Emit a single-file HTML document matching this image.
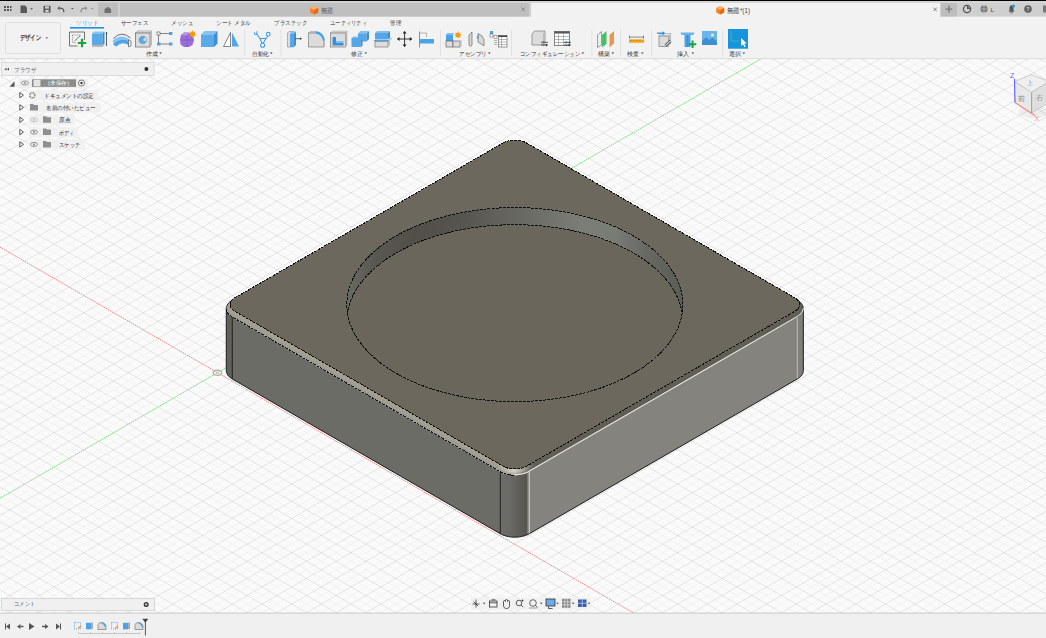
<!DOCTYPE html>
<html><head><meta charset="utf-8">
<style>
*{margin:0;padding:0;box-sizing:border-box}
html,body{width:1046px;height:638px;overflow:hidden;background:#f2f2f2;font-family:"Liberation Sans",sans-serif}
.abs{position:absolute}
#title{position:absolute;left:0;top:0;width:1046px;height:17px;background:#cfcfcf;border-top:1px solid #000}
.tab{position:absolute;top:2px;height:14px;background:#bebebe}
#toolbar{position:absolute;left:0;top:17px;width:1046px;height:42px;background:#f2f2f2;border-bottom:1px solid #d9d9d9}
.lbl{position:absolute;font-size:6px;color:#333;white-space:nowrap;line-height:8px}
.tabl{position:absolute;top:19px;font-size:6.5px;color:#555;white-space:nowrap;line-height:8px}
#bottom{position:absolute;left:0;top:613px;width:1046px;height:25px;background:#f0f0f0;border-top:1px solid #c9c9c9}
.row{position:absolute;height:10px;background:rgba(240,240,240,0.9);font-size:6px;line-height:10px;color:#333;white-space:nowrap}
</style></head><body>
<svg width="1046" height="554" viewBox="0 59 1046 554" style="position:absolute;left:0;top:59px">
<rect x="0" y="59" width="1046" height="554" fill="#ffffff"/>
<path d="M0.00,-959.54L1046.00,-355.58M0.00,-957.83L1046.00,-353.87M0.00,-956.11L1046.00,-352.15M0.00,-954.40L1046.00,-350.44M0.00,-950.97L1046.00,-347.01M0.00,-949.26L1046.00,-345.30M0.00,-947.54L1046.00,-343.58M0.00,-945.83L1046.00,-341.87M0.00,-942.40L1046.00,-338.44M0.00,-940.69L1046.00,-336.73M0.00,-938.97L1046.00,-335.01M0.00,-937.26L1046.00,-333.30M0.00,-933.83L1046.00,-329.87M0.00,-932.12L1046.00,-328.16M0.00,-930.40L1046.00,-326.44M0.00,-928.69L1046.00,-324.73M0.00,-925.26L1046.00,-321.30M0.00,-923.55L1046.00,-319.59M0.00,-921.83L1046.00,-317.87M0.00,-920.12L1046.00,-316.16M0.00,-916.69L1046.00,-312.73M0.00,-914.98L1046.00,-311.02M0.00,-913.26L1046.00,-309.30M0.00,-911.55L1046.00,-307.59M0.00,-908.12L1046.00,-304.16M0.00,-906.41L1046.00,-302.45M0.00,-904.69L1046.00,-300.73M0.00,-902.98L1046.00,-299.02M0.00,-899.55L1046.00,-295.59M0.00,-897.84L1046.00,-293.88M0.00,-896.12L1046.00,-292.16M0.00,-894.41L1046.00,-290.45M0.00,-890.98L1046.00,-287.02M0.00,-889.27L1046.00,-285.31M0.00,-887.55L1046.00,-283.59M0.00,-885.84L1046.00,-281.88M0.00,-882.41L1046.00,-278.45M0.00,-880.70L1046.00,-276.74M0.00,-878.98L1046.00,-275.02M0.00,-877.27L1046.00,-273.31M0.00,-873.84L1046.00,-269.88M0.00,-872.13L1046.00,-268.17M0.00,-870.41L1046.00,-266.45M0.00,-868.70L1046.00,-264.74M0.00,-865.27L1046.00,-261.31M0.00,-863.56L1046.00,-259.60M0.00,-861.84L1046.00,-257.88M0.00,-860.13L1046.00,-256.17M0.00,-856.70L1046.00,-252.74M0.00,-854.99L1046.00,-251.03M0.00,-853.27L1046.00,-249.31M0.00,-851.56L1046.00,-247.60M0.00,-848.13L1046.00,-244.17M0.00,-846.42L1046.00,-242.46M0.00,-844.70L1046.00,-240.74M0.00,-842.99L1046.00,-239.03M0.00,-839.56L1046.00,-235.60M0.00,-837.85L1046.00,-233.89M0.00,-836.13L1046.00,-232.17M0.00,-834.42L1046.00,-230.46M0.00,-830.99L1046.00,-227.03M0.00,-829.28L1046.00,-225.32M0.00,-827.56L1046.00,-223.60M0.00,-825.85L1046.00,-221.89M0.00,-822.42L1046.00,-218.46M0.00,-820.71L1046.00,-216.75M0.00,-818.99L1046.00,-215.03M0.00,-817.28L1046.00,-213.32M0.00,-813.85L1046.00,-209.89M0.00,-812.14L1046.00,-208.18M0.00,-810.42L1046.00,-206.46M0.00,-808.71L1046.00,-204.75M0.00,-805.28L1046.00,-201.32M0.00,-803.57L1046.00,-199.61M0.00,-801.85L1046.00,-197.89M0.00,-800.14L1046.00,-196.18M0.00,-796.71L1046.00,-192.75M0.00,-795.00L1046.00,-191.04M0.00,-793.28L1046.00,-189.32M0.00,-791.57L1046.00,-187.61M0.00,-788.14L1046.00,-184.18M0.00,-786.43L1046.00,-182.47M0.00,-784.71L1046.00,-180.75M0.00,-783.00L1046.00,-179.04M0.00,-779.57L1046.00,-175.61M0.00,-777.86L1046.00,-173.90M0.00,-776.14L1046.00,-172.18M0.00,-774.43L1046.00,-170.47M0.00,-771.00L1046.00,-167.04M0.00,-769.29L1046.00,-165.33M0.00,-767.57L1046.00,-163.61M0.00,-765.86L1046.00,-161.90M0.00,-762.43L1046.00,-158.47M0.00,-760.72L1046.00,-156.76M0.00,-759.00L1046.00,-155.04M0.00,-757.29L1046.00,-153.33M0.00,-753.86L1046.00,-149.90M0.00,-752.15L1046.00,-148.19M0.00,-750.43L1046.00,-146.47M0.00,-748.72L1046.00,-144.76M0.00,-745.29L1046.00,-141.33M0.00,-743.58L1046.00,-139.62M0.00,-741.86L1046.00,-137.90M0.00,-740.15L1046.00,-136.19M0.00,-736.72L1046.00,-132.76M0.00,-735.01L1046.00,-131.05M0.00,-733.29L1046.00,-129.33M0.00,-731.58L1046.00,-127.62M0.00,-728.15L1046.00,-124.19M0.00,-726.44L1046.00,-122.48M0.00,-724.72L1046.00,-120.76M0.00,-723.01L1046.00,-119.05M0.00,-719.58L1046.00,-115.62M0.00,-717.87L1046.00,-113.91M0.00,-716.15L1046.00,-112.19M0.00,-714.44L1046.00,-110.48M0.00,-711.01L1046.00,-107.05M0.00,-709.30L1046.00,-105.34M0.00,-707.58L1046.00,-103.62M0.00,-705.87L1046.00,-101.91M0.00,-702.44L1046.00,-98.48M0.00,-700.73L1046.00,-96.77M0.00,-699.01L1046.00,-95.05M0.00,-697.30L1046.00,-93.34M0.00,-693.87L1046.00,-89.91M0.00,-692.16L1046.00,-88.20M0.00,-690.44L1046.00,-86.48M0.00,-688.73L1046.00,-84.77M0.00,-685.30L1046.00,-81.34M0.00,-683.59L1046.00,-79.63M0.00,-681.87L1046.00,-77.91M0.00,-680.16L1046.00,-76.20M0.00,-676.73L1046.00,-72.77M0.00,-675.02L1046.00,-71.06M0.00,-673.30L1046.00,-69.34M0.00,-671.59L1046.00,-67.63M0.00,-668.16L1046.00,-64.20M0.00,-666.45L1046.00,-62.49M0.00,-664.73L1046.00,-60.77M0.00,-663.02L1046.00,-59.06M0.00,-659.59L1046.00,-55.63M0.00,-657.88L1046.00,-53.92M0.00,-656.16L1046.00,-52.20M0.00,-654.45L1046.00,-50.49M0.00,-651.02L1046.00,-47.06M0.00,-649.31L1046.00,-45.35M0.00,-647.59L1046.00,-43.63M0.00,-645.88L1046.00,-41.92M0.00,-642.45L1046.00,-38.49M0.00,-640.74L1046.00,-36.78M0.00,-639.02L1046.00,-35.06M0.00,-637.31L1046.00,-33.35M0.00,-633.88L1046.00,-29.92M0.00,-632.17L1046.00,-28.21M0.00,-630.45L1046.00,-26.49M0.00,-628.74L1046.00,-24.78M0.00,-625.31L1046.00,-21.35M0.00,-623.60L1046.00,-19.64M0.00,-621.88L1046.00,-17.92M0.00,-620.17L1046.00,-16.21M0.00,-616.74L1046.00,-12.78M0.00,-615.03L1046.00,-11.07M0.00,-613.31L1046.00,-9.35M0.00,-611.60L1046.00,-7.64M0.00,-608.17L1046.00,-4.21M0.00,-606.46L1046.00,-2.50M0.00,-604.74L1046.00,-0.78M0.00,-603.03L1046.00,0.93M0.00,-599.60L1046.00,4.36M0.00,-597.89L1046.00,6.07M0.00,-596.17L1046.00,7.79M0.00,-594.46L1046.00,9.50M0.00,-591.03L1046.00,12.93M0.00,-589.32L1046.00,14.64M0.00,-587.60L1046.00,16.36M0.00,-585.89L1046.00,18.07M0.00,-582.46L1046.00,21.50M0.00,-580.75L1046.00,23.21M0.00,-579.03L1046.00,24.93M0.00,-577.32L1046.00,26.64M0.00,-573.89L1046.00,30.07M0.00,-572.18L1046.00,31.78M0.00,-570.46L1046.00,33.50M0.00,-568.75L1046.00,35.21M0.00,-565.32L1046.00,38.64M0.00,-563.61L1046.00,40.35M0.00,-561.89L1046.00,42.07M0.00,-560.18L1046.00,43.78M0.00,-556.75L1046.00,47.21M0.00,-555.04L1046.00,48.92M0.00,-553.32L1046.00,50.64M0.00,-551.61L1046.00,52.35M0.00,-548.18L1046.00,55.78M0.00,-546.47L1046.00,57.49M0.00,-544.75L1046.00,59.21M0.00,-543.04L1046.00,60.92M0.00,-539.61L1046.00,64.35M0.00,-537.90L1046.00,66.06M0.00,-536.18L1046.00,67.78M0.00,-534.47L1046.00,69.49M0.00,-531.04L1046.00,72.92M0.00,-529.33L1046.00,74.63M0.00,-527.61L1046.00,76.35M0.00,-525.90L1046.00,78.06M0.00,-522.47L1046.00,81.49M0.00,-520.76L1046.00,83.20M0.00,-519.04L1046.00,84.92M0.00,-517.33L1046.00,86.63M0.00,-513.90L1046.00,90.06M0.00,-512.19L1046.00,91.77M0.00,-510.47L1046.00,93.49M0.00,-508.76L1046.00,95.20M0.00,-505.33L1046.00,98.63M0.00,-503.62L1046.00,100.34M0.00,-501.90L1046.00,102.06M0.00,-500.19L1046.00,103.77M0.00,-496.76L1046.00,107.20M0.00,-495.05L1046.00,108.91M0.00,-493.33L1046.00,110.63M0.00,-491.62L1046.00,112.34M0.00,-488.19L1046.00,115.77M0.00,-486.48L1046.00,117.48M0.00,-484.76L1046.00,119.20M0.00,-483.05L1046.00,120.91M0.00,-479.62L1046.00,124.34M0.00,-477.91L1046.00,126.05M0.00,-476.19L1046.00,127.77M0.00,-474.48L1046.00,129.48M0.00,-471.05L1046.00,132.91M0.00,-469.34L1046.00,134.62M0.00,-467.62L1046.00,136.34M0.00,-465.91L1046.00,138.05M0.00,-462.48L1046.00,141.48M0.00,-460.77L1046.00,143.19M0.00,-459.05L1046.00,144.91M0.00,-457.34L1046.00,146.62M0.00,-453.91L1046.00,150.05M0.00,-452.20L1046.00,151.76M0.00,-450.48L1046.00,153.48M0.00,-448.77L1046.00,155.19M0.00,-445.34L1046.00,158.62M0.00,-443.63L1046.00,160.33M0.00,-441.91L1046.00,162.05M0.00,-440.20L1046.00,163.76M0.00,-436.77L1046.00,167.19M0.00,-435.06L1046.00,168.90M0.00,-433.34L1046.00,170.62M0.00,-431.63L1046.00,172.33M0.00,-428.20L1046.00,175.76M0.00,-426.49L1046.00,177.47M0.00,-424.77L1046.00,179.19M0.00,-423.06L1046.00,180.90M0.00,-419.63L1046.00,184.33M0.00,-417.92L1046.00,186.04M0.00,-416.20L1046.00,187.76M0.00,-414.49L1046.00,189.47M0.00,-411.06L1046.00,192.90M0.00,-409.35L1046.00,194.61M0.00,-407.63L1046.00,196.33M0.00,-405.92L1046.00,198.04M0.00,-402.49L1046.00,201.47M0.00,-400.78L1046.00,203.18M0.00,-399.06L1046.00,204.90M0.00,-397.35L1046.00,206.61M0.00,-393.92L1046.00,210.04M0.00,-392.21L1046.00,211.75M0.00,-390.49L1046.00,213.47M0.00,-388.78L1046.00,215.18M0.00,-385.35L1046.00,218.61M0.00,-383.64L1046.00,220.32M0.00,-381.92L1046.00,222.04M0.00,-380.21L1046.00,223.75M0.00,-376.78L1046.00,227.18M0.00,-375.07L1046.00,228.89M0.00,-373.35L1046.00,230.61M0.00,-371.64L1046.00,232.32M0.00,-368.21L1046.00,235.75M0.00,-366.50L1046.00,237.46M0.00,-364.78L1046.00,239.18M0.00,-363.07L1046.00,240.89M0.00,-359.64L1046.00,244.32M0.00,-357.93L1046.00,246.03M0.00,-356.21L1046.00,247.75M0.00,-354.50L1046.00,249.46M0.00,-351.07L1046.00,252.89M0.00,-349.36L1046.00,254.60M0.00,-347.64L1046.00,256.32M0.00,-345.93L1046.00,258.03M0.00,-342.50L1046.00,261.46M0.00,-340.79L1046.00,263.17M0.00,-339.07L1046.00,264.89M0.00,-337.36L1046.00,266.60M0.00,-333.93L1046.00,270.03M0.00,-332.22L1046.00,271.74M0.00,-330.50L1046.00,273.46M0.00,-328.79L1046.00,275.17M0.00,-325.36L1046.00,278.60M0.00,-323.65L1046.00,280.31M0.00,-321.93L1046.00,282.03M0.00,-320.22L1046.00,283.74M0.00,-316.79L1046.00,287.17M0.00,-315.08L1046.00,288.88M0.00,-313.36L1046.00,290.60M0.00,-311.65L1046.00,292.31M0.00,-308.22L1046.00,295.74M0.00,-306.51L1046.00,297.45M0.00,-304.79L1046.00,299.17M0.00,-303.08L1046.00,300.88M0.00,-299.65L1046.00,304.31M0.00,-297.94L1046.00,306.02M0.00,-296.22L1046.00,307.74M0.00,-294.51L1046.00,309.45M0.00,-291.08L1046.00,312.88M0.00,-289.37L1046.00,314.59M0.00,-287.65L1046.00,316.31M0.00,-285.94L1046.00,318.02M0.00,-282.51L1046.00,321.45M0.00,-280.80L1046.00,323.16M0.00,-279.08L1046.00,324.88M0.00,-277.37L1046.00,326.59M0.00,-273.94L1046.00,330.02M0.00,-272.23L1046.00,331.73M0.00,-270.51L1046.00,333.45M0.00,-268.80L1046.00,335.16M0.00,-265.37L1046.00,338.59M0.00,-263.66L1046.00,340.30M0.00,-261.94L1046.00,342.02M0.00,-260.23L1046.00,343.73M0.00,-256.80L1046.00,347.16M0.00,-255.09L1046.00,348.87M0.00,-253.37L1046.00,350.59M0.00,-251.66L1046.00,352.30M0.00,-248.23L1046.00,355.73M0.00,-246.52L1046.00,357.44M0.00,-244.80L1046.00,359.16M0.00,-243.09L1046.00,360.87M0.00,-239.66L1046.00,364.30M0.00,-237.95L1046.00,366.01M0.00,-236.23L1046.00,367.73M0.00,-234.52L1046.00,369.44M0.00,-231.09L1046.00,372.87M0.00,-229.38L1046.00,374.58M0.00,-227.66L1046.00,376.30M0.00,-225.95L1046.00,378.01M0.00,-222.52L1046.00,381.44M0.00,-220.81L1046.00,383.15M0.00,-219.09L1046.00,384.87M0.00,-217.38L1046.00,386.58M0.00,-213.95L1046.00,390.01M0.00,-212.24L1046.00,391.72M0.00,-210.52L1046.00,393.44M0.00,-208.81L1046.00,395.15M0.00,-205.38L1046.00,398.58M0.00,-203.67L1046.00,400.29M0.00,-201.95L1046.00,402.01M0.00,-200.24L1046.00,403.72M0.00,-196.81L1046.00,407.15M0.00,-195.10L1046.00,408.86M0.00,-193.38L1046.00,410.58M0.00,-191.67L1046.00,412.29M0.00,-188.24L1046.00,415.72M0.00,-186.53L1046.00,417.43M0.00,-184.81L1046.00,419.15M0.00,-183.10L1046.00,420.86M0.00,-179.67L1046.00,424.29M0.00,-177.96L1046.00,426.00M0.00,-176.24L1046.00,427.72M0.00,-174.53L1046.00,429.43M0.00,-171.10L1046.00,432.86M0.00,-169.39L1046.00,434.57M0.00,-167.67L1046.00,436.29M0.00,-165.96L1046.00,438.00M0.00,-162.53L1046.00,441.43M0.00,-160.82L1046.00,443.14M0.00,-159.10L1046.00,444.86M0.00,-157.39L1046.00,446.57M0.00,-153.96L1046.00,450.00M0.00,-152.25L1046.00,451.71M0.00,-150.53L1046.00,453.43M0.00,-148.82L1046.00,455.14M0.00,-145.39L1046.00,458.57M0.00,-143.68L1046.00,460.28M0.00,-141.96L1046.00,462.00M0.00,-140.25L1046.00,463.71M0.00,-136.82L1046.00,467.14M0.00,-135.11L1046.00,468.85M0.00,-133.39L1046.00,470.57M0.00,-131.68L1046.00,472.28M0.00,-128.25L1046.00,475.71M0.00,-126.54L1046.00,477.42M0.00,-124.82L1046.00,479.14M0.00,-123.11L1046.00,480.85M0.00,-119.68L1046.00,484.28M0.00,-117.97L1046.00,485.99M0.00,-116.25L1046.00,487.71M0.00,-114.54L1046.00,489.42M0.00,-111.11L1046.00,492.85M0.00,-109.40L1046.00,494.56M0.00,-107.68L1046.00,496.28M0.00,-105.97L1046.00,497.99M0.00,-102.54L1046.00,501.42M0.00,-100.83L1046.00,503.13M0.00,-99.11L1046.00,504.85M0.00,-97.40L1046.00,506.56M0.00,-93.97L1046.00,509.99M0.00,-92.26L1046.00,511.70M0.00,-90.54L1046.00,513.42M0.00,-88.83L1046.00,515.13M0.00,-85.40L1046.00,518.56M0.00,-83.69L1046.00,520.27M0.00,-81.97L1046.00,521.99M0.00,-80.26L1046.00,523.70M0.00,-76.83L1046.00,527.13M0.00,-75.12L1046.00,528.84M0.00,-73.40L1046.00,530.56M0.00,-71.69L1046.00,532.27M0.00,-68.26L1046.00,535.70M0.00,-66.55L1046.00,537.41M0.00,-64.83L1046.00,539.13M0.00,-63.12L1046.00,540.84M0.00,-59.69L1046.00,544.27M0.00,-57.98L1046.00,545.98M0.00,-56.26L1046.00,547.70M0.00,-54.55L1046.00,549.41M0.00,-51.12L1046.00,552.84M0.00,-49.41L1046.00,554.55M0.00,-47.69L1046.00,556.27M0.00,-45.98L1046.00,557.98M0.00,-42.55L1046.00,561.41M0.00,-40.84L1046.00,563.12M0.00,-39.12L1046.00,564.84M0.00,-37.41L1046.00,566.55M0.00,-33.98L1046.00,569.98M0.00,-32.27L1046.00,571.69M0.00,-30.55L1046.00,573.41M0.00,-28.84L1046.00,575.12M0.00,-25.41L1046.00,578.55M0.00,-23.70L1046.00,580.26M0.00,-21.98L1046.00,581.98M0.00,-20.27L1046.00,583.69M0.00,-16.84L1046.00,587.12M0.00,-15.13L1046.00,588.83M0.00,-13.41L1046.00,590.55M0.00,-11.70L1046.00,592.26M0.00,-8.27L1046.00,595.69M0.00,-6.56L1046.00,597.40M0.00,-4.84L1046.00,599.12M0.00,-3.13L1046.00,600.83M0.00,0.30L1046.00,604.26M0.00,2.01L1046.00,605.97M0.00,3.73L1046.00,607.69M0.00,5.44L1046.00,609.40M0.00,8.87L1046.00,612.83M0.00,10.58L1046.00,614.54M0.00,12.30L1046.00,616.26M0.00,14.01L1046.00,617.97M0.00,17.44L1046.00,621.40M0.00,19.15L1046.00,623.11M0.00,20.87L1046.00,624.83M0.00,22.58L1046.00,626.54M0.00,26.01L1046.00,629.97M0.00,27.72L1046.00,631.68M0.00,29.44L1046.00,633.40M0.00,31.15L1046.00,635.11M0.00,34.58L1046.00,638.54M0.00,36.29L1046.00,640.25M0.00,38.01L1046.00,641.97M0.00,39.72L1046.00,643.68M0.00,43.15L1046.00,647.11M0.00,44.86L1046.00,648.82M0.00,46.58L1046.00,650.54M0.00,48.29L1046.00,652.25M0.00,51.72L1046.00,655.68M0.00,53.43L1046.00,657.39M0.00,55.15L1046.00,659.11M0.00,56.86L1046.00,660.82M0.00,60.29L1046.00,664.25M0.00,62.00L1046.00,665.96M0.00,63.72L1046.00,667.68M0.00,65.43L1046.00,669.39M0.00,68.86L1046.00,672.82M0.00,70.57L1046.00,674.53M0.00,72.29L1046.00,676.25M0.00,74.00L1046.00,677.96M0.00,77.43L1046.00,681.39M0.00,79.14L1046.00,683.10M0.00,80.86L1046.00,684.82M0.00,82.57L1046.00,686.53M0.00,86.00L1046.00,689.96M0.00,87.71L1046.00,691.67M0.00,89.43L1046.00,693.39M0.00,91.14L1046.00,695.10M0.00,94.57L1046.00,698.53M0.00,96.28L1046.00,700.24M0.00,98.00L1046.00,701.96M0.00,99.71L1046.00,703.67M0.00,103.14L1046.00,707.10M0.00,104.85L1046.00,708.81M0.00,106.57L1046.00,710.53M0.00,108.28L1046.00,712.24M0.00,111.71L1046.00,715.67M0.00,113.42L1046.00,717.38M0.00,115.14L1046.00,719.10M0.00,116.85L1046.00,720.81M0.00,120.28L1046.00,724.24M0.00,121.99L1046.00,725.95M0.00,123.71L1046.00,727.67M0.00,125.42L1046.00,729.38M0.00,128.85L1046.00,732.81M0.00,130.56L1046.00,734.52M0.00,132.28L1046.00,736.24M0.00,133.99L1046.00,737.95M0.00,137.42L1046.00,741.38M0.00,139.13L1046.00,743.09M0.00,140.85L1046.00,744.81M0.00,142.56L1046.00,746.52M0.00,145.99L1046.00,749.95M0.00,147.70L1046.00,751.66M0.00,149.42L1046.00,753.38M0.00,151.13L1046.00,755.09M0.00,154.56L1046.00,758.52M0.00,156.27L1046.00,760.23M0.00,157.99L1046.00,761.95M0.00,159.70L1046.00,763.66M0.00,163.13L1046.00,767.09M0.00,164.84L1046.00,768.80M0.00,166.56L1046.00,770.52M0.00,168.27L1046.00,772.23M0.00,171.70L1046.00,775.66M0.00,173.41L1046.00,777.37M0.00,175.13L1046.00,779.09M0.00,176.84L1046.00,780.80M0.00,180.27L1046.00,784.23M0.00,181.98L1046.00,785.94M0.00,183.70L1046.00,787.66M0.00,185.41L1046.00,789.37M0.00,188.84L1046.00,792.80M0.00,190.55L1046.00,794.51M0.00,192.27L1046.00,796.23M0.00,193.98L1046.00,797.94M0.00,197.41L1046.00,801.37M0.00,199.12L1046.00,803.08M0.00,200.84L1046.00,804.80M0.00,202.55L1046.00,806.51M0.00,205.98L1046.00,809.94M0.00,207.69L1046.00,811.65M0.00,209.41L1046.00,813.37M0.00,211.12L1046.00,815.08M0.00,214.55L1046.00,818.51M0.00,216.26L1046.00,820.22M0.00,217.98L1046.00,821.94M0.00,219.69L1046.00,823.65M0.00,223.12L1046.00,827.08M0.00,224.83L1046.00,828.79M0.00,226.55L1046.00,830.51M0.00,228.26L1046.00,832.22M0.00,231.69L1046.00,835.65M0.00,233.40L1046.00,837.36M0.00,235.12L1046.00,839.08M0.00,236.83L1046.00,840.79M0.00,240.26L1046.00,844.22M0.00,241.97L1046.00,845.93M0.00,243.69L1046.00,847.65M0.00,245.40L1046.00,849.36M0.00,248.83L1046.00,852.79M0.00,250.54L1046.00,854.50M0.00,252.26L1046.00,856.22M0.00,253.97L1046.00,857.93M0.00,257.40L1046.00,861.36M0.00,259.11L1046.00,863.07M0.00,260.83L1046.00,864.79M0.00,262.54L1046.00,866.50M0.00,265.97L1046.00,869.93M0.00,267.68L1046.00,871.64M0.00,269.40L1046.00,873.36M0.00,271.11L1046.00,875.07M0.00,274.54L1046.00,878.50M0.00,276.25L1046.00,880.21M0.00,277.97L1046.00,881.93M0.00,279.68L1046.00,883.64M0.00,283.11L1046.00,887.07M0.00,284.82L1046.00,888.78M0.00,286.54L1046.00,890.50M0.00,288.25L1046.00,892.21M0.00,291.68L1046.00,895.64M0.00,293.39L1046.00,897.35M0.00,295.11L1046.00,899.07M0.00,296.82L1046.00,900.78M0.00,300.25L1046.00,904.21M0.00,301.96L1046.00,905.92M0.00,303.68L1046.00,907.64M0.00,305.39L1046.00,909.35M0.00,308.82L1046.00,912.78M0.00,310.53L1046.00,914.49M0.00,312.25L1046.00,916.21M0.00,313.96L1046.00,917.92M0.00,317.39L1046.00,921.35M0.00,319.10L1046.00,923.06M0.00,320.82L1046.00,924.78M0.00,322.53L1046.00,926.49M0.00,325.96L1046.00,929.92M0.00,327.67L1046.00,931.63M0.00,329.39L1046.00,933.35M0.00,331.10L1046.00,935.06M0.00,334.53L1046.00,938.49M0.00,336.24L1046.00,940.20M0.00,337.96L1046.00,941.92M0.00,339.67L1046.00,943.63M0.00,343.10L1046.00,947.06M0.00,344.81L1046.00,948.77M0.00,346.53L1046.00,950.49M0.00,348.24L1046.00,952.20M0.00,351.67L1046.00,955.63M0.00,353.38L1046.00,957.34M0.00,355.10L1046.00,959.06M0.00,356.81L1046.00,960.77M0.00,360.24L1046.00,964.20M0.00,361.95L1046.00,965.91M0.00,363.67L1046.00,967.63M0.00,365.38L1046.00,969.34M0.00,368.81L1046.00,972.77M0.00,370.52L1046.00,974.48M0.00,372.24L1046.00,976.20M0.00,373.95L1046.00,977.91M0.00,377.38L1046.00,981.34M0.00,379.09L1046.00,983.05M0.00,380.81L1046.00,984.77M0.00,382.52L1046.00,986.48M0.00,385.95L1046.00,989.91M0.00,387.66L1046.00,991.62M0.00,389.38L1046.00,993.34M0.00,391.09L1046.00,995.05M0.00,394.52L1046.00,998.48M0.00,396.23L1046.00,1000.19M0.00,397.95L1046.00,1001.91M0.00,399.66L1046.00,1003.62M0.00,403.09L1046.00,1007.05M0.00,404.80L1046.00,1008.76M0.00,406.52L1046.00,1010.48M0.00,408.23L1046.00,1012.19M0.00,411.66L1046.00,1015.62M0.00,413.37L1046.00,1017.33M0.00,415.09L1046.00,1019.05M0.00,416.80L1046.00,1020.76M0.00,420.23L1046.00,1024.19M0.00,421.94L1046.00,1025.90M0.00,423.66L1046.00,1027.62M0.00,425.37L1046.00,1029.33M0.00,428.80L1046.00,1032.76M0.00,430.51L1046.00,1034.47M0.00,432.23L1046.00,1036.19M0.00,433.94L1046.00,1037.90M0.00,437.37L1046.00,1041.33M0.00,439.08L1046.00,1043.04M0.00,440.80L1046.00,1044.76M0.00,442.51L1046.00,1046.47M0.00,445.94L1046.00,1049.90M0.00,447.65L1046.00,1051.61M0.00,449.37L1046.00,1053.33M0.00,451.08L1046.00,1055.04M0.00,454.51L1046.00,1058.47M0.00,456.22L1046.00,1060.18M0.00,457.94L1046.00,1061.90M0.00,459.65L1046.00,1063.61M0.00,463.08L1046.00,1067.04M0.00,464.79L1046.00,1068.75M0.00,466.51L1046.00,1070.47M0.00,468.22L1046.00,1072.18M0.00,471.65L1046.00,1075.61M0.00,473.36L1046.00,1077.32M0.00,475.08L1046.00,1079.04M0.00,476.79L1046.00,1080.75M0.00,480.22L1046.00,1084.18M0.00,481.93L1046.00,1085.89M0.00,483.65L1046.00,1087.61M0.00,485.36L1046.00,1089.32M0.00,488.79L1046.00,1092.75M0.00,490.50L1046.00,1094.46M0.00,492.22L1046.00,1096.18M0.00,493.93L1046.00,1097.89M0.00,497.36L1046.00,1101.32M0.00,499.07L1046.00,1103.03M0.00,500.79L1046.00,1104.75M0.00,502.50L1046.00,1106.46M0.00,505.93L1046.00,1109.89M0.00,507.64L1046.00,1111.60M0.00,509.36L1046.00,1113.32M0.00,511.07L1046.00,1115.03M0.00,514.50L1046.00,1118.46M0.00,516.21L1046.00,1120.17M0.00,517.93L1046.00,1121.89M0.00,519.64L1046.00,1123.60M0.00,523.07L1046.00,1127.03M0.00,524.78L1046.00,1128.74M0.00,526.50L1046.00,1130.46M0.00,528.21L1046.00,1132.17M0.00,531.64L1046.00,1135.60M0.00,533.35L1046.00,1137.31M0.00,535.07L1046.00,1139.03M0.00,536.78L1046.00,1140.74M0.00,540.21L1046.00,1144.17M0.00,541.92L1046.00,1145.88M0.00,543.64L1046.00,1147.60M0.00,545.35L1046.00,1149.31M0.00,548.78L1046.00,1152.74M0.00,550.49L1046.00,1154.45M0.00,552.21L1046.00,1156.17M0.00,553.92L1046.00,1157.88M0.00,557.35L1046.00,1161.31M0.00,559.06L1046.00,1163.02M0.00,560.78L1046.00,1164.74M0.00,562.49L1046.00,1166.45M0.00,565.92L1046.00,1169.88M0.00,567.63L1046.00,1171.59M0.00,569.35L1046.00,1173.31M0.00,571.06L1046.00,1175.02M0.00,574.49L1046.00,1178.45M0.00,576.20L1046.00,1180.16M0.00,577.92L1046.00,1181.88M0.00,579.63L1046.00,1183.59M0.00,583.06L1046.00,1187.02M0.00,584.77L1046.00,1188.73M0.00,586.49L1046.00,1190.45M0.00,588.20L1046.00,1192.16M0.00,591.63L1046.00,1195.59M0.00,593.34L1046.00,1197.30M0.00,595.06L1046.00,1199.02M0.00,596.77L1046.00,1200.73M0.00,600.20L1046.00,1204.16M0.00,601.91L1046.00,1205.87M0.00,603.63L1046.00,1207.59M0.00,605.34L1046.00,1209.30M0.00,608.77L1046.00,1212.73M0.00,610.48L1046.00,1214.44M0.00,612.20L1046.00,1216.16M0.00,613.91L1046.00,1217.87M0.00,617.34L1046.00,1221.30M0.00,619.05L1046.00,1223.01M0.00,620.77L1046.00,1224.73M0.00,622.48L1046.00,1226.44M0.00,625.91L1046.00,1229.87M0.00,627.62L1046.00,1231.58M0.00,629.34L1046.00,1233.30M0.00,631.05L1046.00,1235.01M0.00,634.48L1046.00,1238.44M0.00,636.19L1046.00,1240.15M0.00,637.91L1046.00,1241.87M0.00,639.62L1046.00,1243.58M0.00,643.05L1046.00,1247.01M0.00,644.76L1046.00,1248.72M0.00,646.48L1046.00,1250.44M0.00,648.19L1046.00,1252.15M0.00,651.62L1046.00,1255.58M0.00,653.33L1046.00,1257.29M0.00,655.05L1046.00,1259.01M0.00,656.76L1046.00,1260.72M0.00,660.19L1046.00,1264.15M0.00,661.90L1046.00,1265.86M0.00,663.62L1046.00,1267.58M0.00,665.33L1046.00,1269.29M0.00,668.76L1046.00,1272.72M0.00,670.47L1046.00,1274.43M0.00,672.19L1046.00,1276.15M0.00,673.90L1046.00,1277.86M0.00,677.33L1046.00,1281.29M0.00,679.04L1046.00,1283.00M0.00,680.76L1046.00,1284.72M0.00,682.47L1046.00,1286.43M0.00,685.90L1046.00,1289.86M0.00,687.61L1046.00,1291.57M0.00,689.33L1046.00,1293.29M0.00,691.04L1046.00,1295.00M0.00,694.47L1046.00,1298.43M0.00,696.18L1046.00,1300.14M0.00,697.90L1046.00,1301.86M0.00,699.61L1046.00,1303.57M0.00,703.04L1046.00,1307.00M0.00,704.75L1046.00,1308.71M0.00,706.47L1046.00,1310.43M0.00,708.18L1046.00,1312.14M0.00,711.61L1046.00,1315.57M0.00,713.32L1046.00,1317.28M0.00,715.04L1046.00,1319.00M0.00,716.75L1046.00,1320.71M0.00,720.18L1046.00,1324.14M0.00,721.89L1046.00,1325.85M0.00,723.61L1046.00,1327.57M0.00,725.32L1046.00,1329.28M0.00,728.75L1046.00,1332.71M0.00,730.46L1046.00,1334.42M0.00,732.18L1046.00,1336.14M0.00,733.89L1046.00,1337.85M0.00,737.32L1046.00,1341.28M0.00,739.03L1046.00,1342.99M0.00,740.75L1046.00,1344.71M0.00,742.46L1046.00,1346.42M0.00,745.89L1046.00,1349.85M0.00,747.60L1046.00,1351.56M0.00,749.32L1046.00,1353.28M0.00,751.03L1046.00,1354.99M0.00,754.46L1046.00,1358.42M0.00,756.17L1046.00,1360.13M0.00,757.89L1046.00,1361.85M0.00,759.60L1046.00,1363.56M0.00,763.03L1046.00,1366.99M0.00,764.74L1046.00,1368.70M0.00,766.46L1046.00,1370.42M0.00,768.17L1046.00,1372.13M0.00,771.60L1046.00,1375.56M0.00,773.31L1046.00,1377.27M0.00,775.03L1046.00,1378.99M0.00,776.74L1046.00,1380.70M0.00,780.17L1046.00,1384.13M0.00,781.88L1046.00,1385.84M0.00,783.60L1046.00,1387.56M0.00,785.31L1046.00,1389.27M0.00,788.74L1046.00,1392.70M0.00,790.45L1046.00,1394.41M0.00,792.17L1046.00,1396.13M0.00,793.88L1046.00,1397.84M0.00,797.31L1046.00,1401.27M0.00,799.02L1046.00,1402.98M0.00,800.74L1046.00,1404.70M0.00,802.45L1046.00,1406.41M0.00,805.88L1046.00,1409.84M0.00,807.59L1046.00,1411.55M0.00,809.31L1046.00,1413.27M0.00,811.02L1046.00,1414.98M0.00,814.45L1046.00,1418.41M0.00,816.16L1046.00,1420.12M0.00,817.88L1046.00,1421.84M0.00,819.59L1046.00,1423.55M0.00,823.02L1046.00,1426.98M0.00,824.73L1046.00,1428.69M0.00,826.45L1046.00,1430.41M0.00,828.16L1046.00,1432.12M0.00,831.59L1046.00,1435.55M0.00,833.30L1046.00,1437.26M0.00,835.02L1046.00,1438.98M0.00,836.73L1046.00,1440.69M0.00,840.16L1046.00,1444.12M0.00,841.87L1046.00,1445.83M0.00,843.59L1046.00,1447.55M0.00,845.30L1046.00,1449.26M0.00,848.73L1046.00,1452.69M0.00,850.44L1046.00,1454.40M0.00,852.16L1046.00,1456.12M0.00,853.87L1046.00,1457.83M0.00,857.30L1046.00,1461.26M0.00,859.01L1046.00,1462.97M0.00,860.73L1046.00,1464.69M0.00,862.44L1046.00,1466.40M0.00,865.87L1046.00,1469.83M0.00,867.58L1046.00,1471.54M0.00,869.30L1046.00,1473.26M0.00,871.01L1046.00,1474.97M0.00,874.44L1046.00,1478.40M0.00,876.15L1046.00,1480.11M0.00,877.87L1046.00,1481.83M0.00,879.58L1046.00,1483.54M0.00,883.01L1046.00,1486.97M0.00,884.72L1046.00,1488.68M0.00,886.44L1046.00,1490.40M0.00,888.15L1046.00,1492.11M0.00,891.58L1046.00,1495.54M0.00,893.29L1046.00,1497.25M0.00,895.01L1046.00,1498.97M0.00,896.72L1046.00,1500.68M0.00,900.15L1046.00,1504.11M0.00,901.86L1046.00,1505.82M0.00,903.58L1046.00,1507.54M0.00,905.29L1046.00,1509.25M0.00,908.72L1046.00,1512.68M0.00,910.43L1046.00,1514.39M0.00,912.15L1046.00,1516.11M0.00,913.86L1046.00,1517.82M0.00,917.29L1046.00,1521.25M0.00,919.00L1046.00,1522.96M0.00,920.72L1046.00,1524.68M0.00,922.43L1046.00,1526.39M0.00,925.86L1046.00,1529.82M0.00,927.57L1046.00,1531.53M0.00,929.29L1046.00,1533.25M0.00,931.00L1046.00,1534.96M0.00,934.43L1046.00,1538.39M0.00,936.14L1046.00,1540.10M0.00,937.86L1046.00,1541.82M0.00,939.57L1046.00,1543.53M0.00,943.00L1046.00,1546.96M0.00,944.71L1046.00,1548.67M0.00,946.43L1046.00,1550.39M0.00,948.14L1046.00,1552.10M0.00,951.57L1046.00,1555.53M0.00,953.28L1046.00,1557.24M0.00,955.00L1046.00,1558.96M0.00,956.71L1046.00,1560.67M0.00,960.14L1046.00,1564.10M0.00,961.85L1046.00,1565.81M0.00,963.57L1046.00,1567.53M0.00,965.28L1046.00,1569.24M0.00,968.71L1046.00,1572.67M0.00,970.42L1046.00,1574.38M0.00,972.14L1046.00,1576.10M0.00,973.85L1046.00,1577.81M0.00,977.28L1046.00,1581.24M0.00,978.99L1046.00,1582.95M0.00,980.71L1046.00,1584.67M0.00,982.42L1046.00,1586.38M0.00,985.85L1046.00,1589.81M0.00,987.56L1046.00,1591.52M0.00,989.28L1046.00,1593.24M0.00,990.99L1046.00,1594.95M0.00,994.42L1046.00,1598.38M0.00,996.13L1046.00,1600.09M0.00,997.85L1046.00,1601.81M0.00,999.56L1046.00,1603.52M0.00,1002.99L1046.00,1606.95M0.00,1004.70L1046.00,1608.66M0.00,1006.42L1046.00,1610.38M0.00,1008.13L1046.00,1612.09M0.00,1011.56L1046.00,1615.52M0.00,1013.27L1046.00,1617.23M0.00,1014.99L1046.00,1618.95M0.00,1016.70L1046.00,1620.66M0.00,1020.13L1046.00,1624.09M0.00,1021.84L1046.00,1625.80M0.00,1023.56L1046.00,1627.52M0.00,1025.27L1046.00,1629.23M0.00,1028.70L1046.00,1632.66M0.00,1030.41L1046.00,1634.37M0.00,1032.13L1046.00,1636.09M0.00,1033.84L1046.00,1637.80M0.00,1037.27L1046.00,1641.23M0.00,1038.98L1046.00,1642.94M0.00,1040.70L1046.00,1644.66M0.00,1042.41L1046.00,1646.37M0.00,1045.84L1046.00,1649.80M0.00,1047.55L1046.00,1651.51M0.00,1049.27L1046.00,1653.23M0.00,1050.98L1046.00,1654.94M0.00,1054.41L1046.00,1658.37M0.00,1056.12L1046.00,1660.08M0.00,1057.84L1046.00,1661.80M0.00,1059.55L1046.00,1663.51M0.00,1062.98L1046.00,1666.94M0.00,1064.69L1046.00,1668.65M0.00,1066.41L1046.00,1670.37M0.00,1068.12L1046.00,1672.08M0.00,1071.55L1046.00,1675.51M0.00,1073.26L1046.00,1677.22M0.00,1074.98L1046.00,1678.94M0.00,1076.69L1046.00,1680.65M0.00,1080.12L1046.00,1684.08M0.00,1081.83L1046.00,1685.79M0.00,1083.55L1046.00,1687.51M0.00,1085.26L1046.00,1689.22M0.00,1088.69L1046.00,1692.65M0.00,1090.40L1046.00,1694.36M0.00,1092.12L1046.00,1696.08M0.00,1093.83L1046.00,1697.79M0.00,1097.26L1046.00,1701.22M0.00,1098.97L1046.00,1702.93M0.00,1100.69L1046.00,1704.65M0.00,1102.40L1046.00,1706.36M0.00,1105.83L1046.00,1709.79M0.00,1107.54L1046.00,1711.50M0.00,1109.26L1046.00,1713.22M0.00,1110.97L1046.00,1714.93M0.00,1114.40L1046.00,1718.36M0.00,1116.11L1046.00,1720.07M0.00,1117.83L1046.00,1721.79M0.00,1119.54L1046.00,1723.50M0.00,1122.97L1046.00,1726.93M0.00,1124.68L1046.00,1728.64M0.00,1126.40L1046.00,1730.36M0.00,1128.11L1046.00,1732.07M0.00,1131.54L1046.00,1735.50M0.00,1133.25L1046.00,1737.21M0.00,1134.97L1046.00,1738.93M0.00,1136.68L1046.00,1740.64M0.00,1140.11L1046.00,1744.07M0.00,1141.82L1046.00,1745.78M0.00,1143.54L1046.00,1747.50M0.00,1145.25L1046.00,1749.21M0.00,1148.68L1046.00,1752.64M0.00,1150.39L1046.00,1754.35M0.00,1152.11L1046.00,1756.07M0.00,1153.82L1046.00,1757.78M0.00,1157.25L1046.00,1761.21M0.00,1158.96L1046.00,1762.92M0.00,1160.68L1046.00,1764.64M0.00,1162.39L1046.00,1766.35M0.00,1165.82L1046.00,1769.78M0.00,1167.53L1046.00,1771.49M0.00,1169.25L1046.00,1773.21M0.00,1170.96L1046.00,1774.92M0.00,1174.39L1046.00,1778.35M0.00,1176.10L1046.00,1780.06M0.00,1177.82L1046.00,1781.78M0.00,1179.53L1046.00,1783.49M0.00,1182.96L1046.00,1786.92M0.00,1184.67L1046.00,1788.63M0.00,1186.39L1046.00,1790.35M0.00,1188.10L1046.00,1792.06M0.00,1191.53L1046.00,1795.49M0.00,1193.24L1046.00,1797.20M0.00,1194.96L1046.00,1798.92M0.00,1196.67L1046.00,1800.63M0.00,1200.10L1046.00,1804.06M0.00,1201.81L1046.00,1805.77M0.00,1203.53L1046.00,1807.49M0.00,1205.24L1046.00,1809.20M0.00,1208.67L1046.00,1812.63M0.00,1210.38L1046.00,1814.34M0.00,1212.10L1046.00,1816.06M0.00,1213.81L1046.00,1817.77M0.00,1217.24L1046.00,1821.20M0.00,1218.95L1046.00,1822.91M0.00,1220.67L1046.00,1824.63M0.00,1222.38L1046.00,1826.34M0.00,1225.81L1046.00,1829.77M0.00,1227.52L1046.00,1831.48M0.00,1229.24L1046.00,1833.20M0.00,1230.95L1046.00,1834.91M0.00,1234.38L1046.00,1838.34M0.00,1236.09L1046.00,1840.05M0.00,1237.81L1046.00,1841.77M0.00,1239.52L1046.00,1843.48M0.00,1242.95L1046.00,1846.91M0.00,1244.66L1046.00,1848.62M0.00,1246.38L1046.00,1850.34M0.00,1248.09L1046.00,1852.05M0.00,1251.52L1046.00,1855.48M0.00,1253.23L1046.00,1857.19M0.00,1254.95L1046.00,1858.91M0.00,1256.66L1046.00,1860.62M0.00,1260.09L1046.00,1864.05M0.00,1261.80L1046.00,1865.76M0.00,1263.52L1046.00,1867.48M0.00,1265.23L1046.00,1869.19M0.00,1268.66L1046.00,1872.62M0.00,1270.37L1046.00,1874.33M0.00,1272.09L1046.00,1876.05M0.00,1273.80L1046.00,1877.76M0.00,1277.23L1046.00,1881.19M0.00,1278.94L1046.00,1882.90M0.00,1280.66L1046.00,1884.62M0.00,1282.37L1046.00,1886.33M0.00,1285.80L1046.00,1889.76M0.00,1287.51L1046.00,1891.47M0.00,1289.23L1046.00,1893.19M0.00,1290.94L1046.00,1894.90M0.00,1294.37L1046.00,1898.33M0.00,1296.08L1046.00,1900.04M0.00,1297.80L1046.00,1901.76M0.00,1299.51L1046.00,1903.47M0.00,1302.94L1046.00,1906.90M0.00,1304.65L1046.00,1908.61M0.00,1306.37L1046.00,1910.33M0.00,1308.08L1046.00,1912.04M0.00,1311.51L1046.00,1915.47M0.00,1313.22L1046.00,1917.18M0.00,1314.94L1046.00,1918.90M0.00,1316.65L1046.00,1920.61M0.00,1320.08L1046.00,1924.04M0.00,1321.79L1046.00,1925.75M0.00,1323.51L1046.00,1927.47M0.00,1325.22L1046.00,1929.18M0.00,1328.65L1046.00,1932.61M0.00,1330.36L1046.00,1934.32M0.00,1332.08L1046.00,1936.04M0.00,1333.79L1046.00,1937.75M0.00,1337.22L1046.00,1941.18M0.00,1338.93L1046.00,1942.89M0.00,1340.65L1046.00,1944.61M0.00,1342.36L1046.00,1946.32M0.00,1345.79L1046.00,1949.75M0.00,1347.50L1046.00,1951.46M0.00,1349.22L1046.00,1953.18M0.00,1350.93L1046.00,1954.89M0.00,1354.36L1046.00,1958.32M0.00,1356.07L1046.00,1960.03M0.00,1357.79L1046.00,1961.75M0.00,1359.50L1046.00,1963.46M0.00,1362.93L1046.00,1966.89M0.00,1364.64L1046.00,1968.60M0.00,1366.36L1046.00,1970.32M0.00,1368.07L1046.00,1972.03M0.00,1371.50L1046.00,1975.46M0.00,1373.21L1046.00,1977.17M0.00,1374.93L1046.00,1978.89M0.00,1376.64L1046.00,1980.60M0.00,1380.07L1046.00,1984.03M0.00,1381.78L1046.00,1985.74M0.00,1383.50L1046.00,1987.46M0.00,1385.21L1046.00,1989.17M0.00,1388.64L1046.00,1992.60M0.00,1390.35L1046.00,1994.31M0.00,1392.07L1046.00,1996.03M0.00,1393.78L1046.00,1997.74M0.00,1397.21L1046.00,2001.17M0.00,1398.92L1046.00,2002.88M0.00,1400.64L1046.00,2004.60M0.00,1402.35L1046.00,2006.31M0.00,1405.78L1046.00,2009.74M0.00,1407.49L1046.00,2011.45M0.00,1409.21L1046.00,2013.17M0.00,1410.92L1046.00,2014.88M0.00,1414.35L1046.00,2018.31M0.00,1416.06L1046.00,2020.02M0.00,1417.78L1046.00,2021.74M0.00,1419.49L1046.00,2023.45M0.00,1422.92L1046.00,2026.88M0.00,1424.63L1046.00,2028.59M0.00,1426.35L1046.00,2030.31M0.00,1428.06L1046.00,2032.02M0.00,1431.49L1046.00,2035.45M0.00,1433.20L1046.00,2037.16M0.00,1434.92L1046.00,2038.88M0.00,1436.63L1046.00,2040.59M0.00,1440.06L1046.00,2044.02M0.00,1441.77L1046.00,2045.73M0.00,1443.49L1046.00,2047.45M0.00,1445.20L1046.00,2049.16M0.00,1448.63L1046.00,2052.59M0.00,1450.34L1046.00,2054.30M0.00,1452.06L1046.00,2056.02M0.00,1453.77L1046.00,2057.73M0.00,-708.37L1046.00,-1312.33M0.00,-706.66L1046.00,-1310.62M0.00,-704.94L1046.00,-1308.90M0.00,-703.23L1046.00,-1307.19M0.00,-699.80L1046.00,-1303.76M0.00,-698.09L1046.00,-1302.05M0.00,-696.37L1046.00,-1300.33M0.00,-694.66L1046.00,-1298.62M0.00,-691.23L1046.00,-1295.19M0.00,-689.52L1046.00,-1293.48M0.00,-687.80L1046.00,-1291.76M0.00,-686.09L1046.00,-1290.05M0.00,-682.66L1046.00,-1286.62M0.00,-680.95L1046.00,-1284.91M0.00,-679.23L1046.00,-1283.19M0.00,-677.52L1046.00,-1281.48M0.00,-674.09L1046.00,-1278.05M0.00,-672.38L1046.00,-1276.34M0.00,-670.66L1046.00,-1274.62M0.00,-668.95L1046.00,-1272.91M0.00,-665.52L1046.00,-1269.48M0.00,-663.81L1046.00,-1267.77M0.00,-662.09L1046.00,-1266.05M0.00,-660.38L1046.00,-1264.34M0.00,-656.95L1046.00,-1260.91M0.00,-655.24L1046.00,-1259.20M0.00,-653.52L1046.00,-1257.48M0.00,-651.81L1046.00,-1255.77M0.00,-648.38L1046.00,-1252.34M0.00,-646.67L1046.00,-1250.63M0.00,-644.95L1046.00,-1248.91M0.00,-643.24L1046.00,-1247.20M0.00,-639.81L1046.00,-1243.77M0.00,-638.10L1046.00,-1242.06M0.00,-636.38L1046.00,-1240.34M0.00,-634.67L1046.00,-1238.63M0.00,-631.24L1046.00,-1235.20M0.00,-629.53L1046.00,-1233.49M0.00,-627.81L1046.00,-1231.77M0.00,-626.10L1046.00,-1230.06M0.00,-622.67L1046.00,-1226.63M0.00,-620.96L1046.00,-1224.92M0.00,-619.24L1046.00,-1223.20M0.00,-617.53L1046.00,-1221.49M0.00,-614.10L1046.00,-1218.06M0.00,-612.39L1046.00,-1216.35M0.00,-610.67L1046.00,-1214.63M0.00,-608.96L1046.00,-1212.92M0.00,-605.53L1046.00,-1209.49M0.00,-603.82L1046.00,-1207.78M0.00,-602.10L1046.00,-1206.06M0.00,-600.39L1046.00,-1204.35M0.00,-596.96L1046.00,-1200.92M0.00,-595.25L1046.00,-1199.21M0.00,-593.53L1046.00,-1197.49M0.00,-591.82L1046.00,-1195.78M0.00,-588.39L1046.00,-1192.35M0.00,-586.68L1046.00,-1190.64M0.00,-584.96L1046.00,-1188.92M0.00,-583.25L1046.00,-1187.21M0.00,-579.82L1046.00,-1183.78M0.00,-578.11L1046.00,-1182.07M0.00,-576.39L1046.00,-1180.35M0.00,-574.68L1046.00,-1178.64M0.00,-571.25L1046.00,-1175.21M0.00,-569.54L1046.00,-1173.50M0.00,-567.82L1046.00,-1171.78M0.00,-566.11L1046.00,-1170.07M0.00,-562.68L1046.00,-1166.64M0.00,-560.97L1046.00,-1164.93M0.00,-559.25L1046.00,-1163.21M0.00,-557.54L1046.00,-1161.50M0.00,-554.11L1046.00,-1158.07M0.00,-552.40L1046.00,-1156.36M0.00,-550.68L1046.00,-1154.64M0.00,-548.97L1046.00,-1152.93M0.00,-545.54L1046.00,-1149.50M0.00,-543.83L1046.00,-1147.79M0.00,-542.11L1046.00,-1146.07M0.00,-540.40L1046.00,-1144.36M0.00,-536.97L1046.00,-1140.93M0.00,-535.26L1046.00,-1139.22M0.00,-533.54L1046.00,-1137.50M0.00,-531.83L1046.00,-1135.79M0.00,-528.40L1046.00,-1132.36M0.00,-526.69L1046.00,-1130.65M0.00,-524.97L1046.00,-1128.93M0.00,-523.26L1046.00,-1127.22M0.00,-519.83L1046.00,-1123.79M0.00,-518.12L1046.00,-1122.08M0.00,-516.40L1046.00,-1120.36M0.00,-514.69L1046.00,-1118.65M0.00,-511.26L1046.00,-1115.22M0.00,-509.55L1046.00,-1113.51M0.00,-507.83L1046.00,-1111.79M0.00,-506.12L1046.00,-1110.08M0.00,-502.69L1046.00,-1106.65M0.00,-500.98L1046.00,-1104.94M0.00,-499.26L1046.00,-1103.22M0.00,-497.55L1046.00,-1101.51M0.00,-494.12L1046.00,-1098.08M0.00,-492.41L1046.00,-1096.37M0.00,-490.69L1046.00,-1094.65M0.00,-488.98L1046.00,-1092.94M0.00,-485.55L1046.00,-1089.51M0.00,-483.84L1046.00,-1087.80M0.00,-482.12L1046.00,-1086.08M0.00,-480.41L1046.00,-1084.37M0.00,-476.98L1046.00,-1080.94M0.00,-475.27L1046.00,-1079.23M0.00,-473.55L1046.00,-1077.51M0.00,-471.84L1046.00,-1075.80M0.00,-468.41L1046.00,-1072.37M0.00,-466.70L1046.00,-1070.66M0.00,-464.98L1046.00,-1068.94M0.00,-463.27L1046.00,-1067.23M0.00,-459.84L1046.00,-1063.80M0.00,-458.13L1046.00,-1062.09M0.00,-456.41L1046.00,-1060.37M0.00,-454.70L1046.00,-1058.66M0.00,-451.27L1046.00,-1055.23M0.00,-449.56L1046.00,-1053.52M0.00,-447.84L1046.00,-1051.80M0.00,-446.13L1046.00,-1050.09M0.00,-442.70L1046.00,-1046.66M0.00,-440.99L1046.00,-1044.95M0.00,-439.27L1046.00,-1043.23M0.00,-437.56L1046.00,-1041.52M0.00,-434.13L1046.00,-1038.09M0.00,-432.42L1046.00,-1036.38M0.00,-430.70L1046.00,-1034.66M0.00,-428.99L1046.00,-1032.95M0.00,-425.56L1046.00,-1029.52M0.00,-423.85L1046.00,-1027.81M0.00,-422.13L1046.00,-1026.09M0.00,-420.42L1046.00,-1024.38M0.00,-416.99L1046.00,-1020.95M0.00,-415.28L1046.00,-1019.24M0.00,-413.56L1046.00,-1017.52M0.00,-411.85L1046.00,-1015.81M0.00,-408.42L1046.00,-1012.38M0.00,-406.71L1046.00,-1010.67M0.00,-404.99L1046.00,-1008.95M0.00,-403.28L1046.00,-1007.24M0.00,-399.85L1046.00,-1003.81M0.00,-398.14L1046.00,-1002.10M0.00,-396.42L1046.00,-1000.38M0.00,-394.71L1046.00,-998.67M0.00,-391.28L1046.00,-995.24M0.00,-389.57L1046.00,-993.53M0.00,-387.85L1046.00,-991.81M0.00,-386.14L1046.00,-990.10M0.00,-382.71L1046.00,-986.67M0.00,-381.00L1046.00,-984.96M0.00,-379.28L1046.00,-983.24M0.00,-377.57L1046.00,-981.53M0.00,-374.14L1046.00,-978.10M0.00,-372.43L1046.00,-976.39M0.00,-370.71L1046.00,-974.67M0.00,-369.00L1046.00,-972.96M0.00,-365.57L1046.00,-969.53M0.00,-363.86L1046.00,-967.82M0.00,-362.14L1046.00,-966.10M0.00,-360.43L1046.00,-964.39M0.00,-357.00L1046.00,-960.96M0.00,-355.29L1046.00,-959.25M0.00,-353.57L1046.00,-957.53M0.00,-351.86L1046.00,-955.82M0.00,-348.43L1046.00,-952.39M0.00,-346.72L1046.00,-950.68M0.00,-345.00L1046.00,-948.96M0.00,-343.29L1046.00,-947.25M0.00,-339.86L1046.00,-943.82M0.00,-338.15L1046.00,-942.11M0.00,-336.43L1046.00,-940.39M0.00,-334.72L1046.00,-938.68M0.00,-331.29L1046.00,-935.25M0.00,-329.58L1046.00,-933.54M0.00,-327.86L1046.00,-931.82M0.00,-326.15L1046.00,-930.11M0.00,-322.72L1046.00,-926.68M0.00,-321.01L1046.00,-924.97M0.00,-319.29L1046.00,-923.25M0.00,-317.58L1046.00,-921.54M0.00,-314.15L1046.00,-918.11M0.00,-312.44L1046.00,-916.40M0.00,-310.72L1046.00,-914.68M0.00,-309.01L1046.00,-912.97M0.00,-305.58L1046.00,-909.54M0.00,-303.87L1046.00,-907.83M0.00,-302.15L1046.00,-906.11M0.00,-300.44L1046.00,-904.40M0.00,-297.01L1046.00,-900.97M0.00,-295.30L1046.00,-899.26M0.00,-293.58L1046.00,-897.54M0.00,-291.87L1046.00,-895.83M0.00,-288.44L1046.00,-892.40M0.00,-286.73L1046.00,-890.69M0.00,-285.01L1046.00,-888.97M0.00,-283.30L1046.00,-887.26M0.00,-279.87L1046.00,-883.83M0.00,-278.16L1046.00,-882.12M0.00,-276.44L1046.00,-880.40M0.00,-274.73L1046.00,-878.69M0.00,-271.30L1046.00,-875.26M0.00,-269.59L1046.00,-873.55M0.00,-267.87L1046.00,-871.83M0.00,-266.16L1046.00,-870.12M0.00,-262.73L1046.00,-866.69M0.00,-261.02L1046.00,-864.98M0.00,-259.30L1046.00,-863.26M0.00,-257.59L1046.00,-861.55M0.00,-254.16L1046.00,-858.12M0.00,-252.45L1046.00,-856.41M0.00,-250.73L1046.00,-854.69M0.00,-249.02L1046.00,-852.98M0.00,-245.59L1046.00,-849.55M0.00,-243.88L1046.00,-847.84M0.00,-242.16L1046.00,-846.12M0.00,-240.45L1046.00,-844.41M0.00,-237.02L1046.00,-840.98M0.00,-235.31L1046.00,-839.27M0.00,-233.59L1046.00,-837.55M0.00,-231.88L1046.00,-835.84M0.00,-228.45L1046.00,-832.41M0.00,-226.74L1046.00,-830.70M0.00,-225.02L1046.00,-828.98M0.00,-223.31L1046.00,-827.27M0.00,-219.88L1046.00,-823.84M0.00,-218.17L1046.00,-822.13M0.00,-216.45L1046.00,-820.41M0.00,-214.74L1046.00,-818.70M0.00,-211.31L1046.00,-815.27M0.00,-209.60L1046.00,-813.56M0.00,-207.88L1046.00,-811.84M0.00,-206.17L1046.00,-810.13M0.00,-202.74L1046.00,-806.70M0.00,-201.03L1046.00,-804.99M0.00,-199.31L1046.00,-803.27M0.00,-197.60L1046.00,-801.56M0.00,-194.17L1046.00,-798.13M0.00,-192.46L1046.00,-796.42M0.00,-190.74L1046.00,-794.70M0.00,-189.03L1046.00,-792.99M0.00,-185.60L1046.00,-789.56M0.00,-183.89L1046.00,-787.85M0.00,-182.17L1046.00,-786.13M0.00,-180.46L1046.00,-784.42M0.00,-177.03L1046.00,-780.99M0.00,-175.32L1046.00,-779.28M0.00,-173.60L1046.00,-777.56M0.00,-171.89L1046.00,-775.85M0.00,-168.46L1046.00,-772.42M0.00,-166.75L1046.00,-770.71M0.00,-165.03L1046.00,-768.99M0.00,-163.32L1046.00,-767.28M0.00,-159.89L1046.00,-763.85M0.00,-158.18L1046.00,-762.14M0.00,-156.46L1046.00,-760.42M0.00,-154.75L1046.00,-758.71M0.00,-151.32L1046.00,-755.28M0.00,-149.61L1046.00,-753.57M0.00,-147.89L1046.00,-751.85M0.00,-146.18L1046.00,-750.14M0.00,-142.75L1046.00,-746.71M0.00,-141.04L1046.00,-745.00M0.00,-139.32L1046.00,-743.28M0.00,-137.61L1046.00,-741.57M0.00,-134.18L1046.00,-738.14M0.00,-132.47L1046.00,-736.43M0.00,-130.75L1046.00,-734.71M0.00,-129.04L1046.00,-733.00M0.00,-125.61L1046.00,-729.57M0.00,-123.90L1046.00,-727.86M0.00,-122.18L1046.00,-726.14M0.00,-120.47L1046.00,-724.43M0.00,-117.04L1046.00,-721.00M0.00,-115.33L1046.00,-719.29M0.00,-113.61L1046.00,-717.57M0.00,-111.90L1046.00,-715.86M0.00,-108.47L1046.00,-712.43M0.00,-106.76L1046.00,-710.72M0.00,-105.04L1046.00,-709.00M0.00,-103.33L1046.00,-707.29M0.00,-99.90L1046.00,-703.86M0.00,-98.19L1046.00,-702.15M0.00,-96.47L1046.00,-700.43M0.00,-94.76L1046.00,-698.72M0.00,-91.33L1046.00,-695.29M0.00,-89.62L1046.00,-693.58M0.00,-87.90L1046.00,-691.86M0.00,-86.19L1046.00,-690.15M0.00,-82.76L1046.00,-686.72M0.00,-81.05L1046.00,-685.01M0.00,-79.33L1046.00,-683.29M0.00,-77.62L1046.00,-681.58M0.00,-74.19L1046.00,-678.15M0.00,-72.48L1046.00,-676.44M0.00,-70.76L1046.00,-674.72M0.00,-69.05L1046.00,-673.01M0.00,-65.62L1046.00,-669.58M0.00,-63.91L1046.00,-667.87M0.00,-62.19L1046.00,-666.15M0.00,-60.48L1046.00,-664.44M0.00,-57.05L1046.00,-661.01M0.00,-55.34L1046.00,-659.30M0.00,-53.62L1046.00,-657.58M0.00,-51.91L1046.00,-655.87M0.00,-48.48L1046.00,-652.44M0.00,-46.77L1046.00,-650.73M0.00,-45.05L1046.00,-649.01M0.00,-43.34L1046.00,-647.30M0.00,-39.91L1046.00,-643.87M0.00,-38.20L1046.00,-642.16M0.00,-36.48L1046.00,-640.44M0.00,-34.77L1046.00,-638.73M0.00,-31.34L1046.00,-635.30M0.00,-29.63L1046.00,-633.59M0.00,-27.91L1046.00,-631.87M0.00,-26.20L1046.00,-630.16M0.00,-22.77L1046.00,-626.73M0.00,-21.06L1046.00,-625.02M0.00,-19.34L1046.00,-623.30M0.00,-17.63L1046.00,-621.59M0.00,-14.20L1046.00,-618.16M0.00,-12.49L1046.00,-616.45M0.00,-10.77L1046.00,-614.73M0.00,-9.06L1046.00,-613.02M0.00,-5.63L1046.00,-609.59M0.00,-3.92L1046.00,-607.88M0.00,-2.20L1046.00,-606.16M0.00,-0.49L1046.00,-604.45M0.00,2.94L1046.00,-601.02M0.00,4.65L1046.00,-599.31M0.00,6.37L1046.00,-597.59M0.00,8.08L1046.00,-595.88M0.00,11.51L1046.00,-592.45M0.00,13.22L1046.00,-590.74M0.00,14.94L1046.00,-589.02M0.00,16.65L1046.00,-587.31M0.00,20.08L1046.00,-583.88M0.00,21.79L1046.00,-582.17M0.00,23.51L1046.00,-580.45M0.00,25.22L1046.00,-578.74M0.00,28.65L1046.00,-575.31M0.00,30.36L1046.00,-573.60M0.00,32.08L1046.00,-571.88M0.00,33.79L1046.00,-570.17M0.00,37.22L1046.00,-566.74M0.00,38.93L1046.00,-565.03M0.00,40.65L1046.00,-563.31M0.00,42.36L1046.00,-561.60M0.00,45.79L1046.00,-558.17M0.00,47.50L1046.00,-556.46M0.00,49.22L1046.00,-554.74M0.00,50.93L1046.00,-553.03M0.00,54.36L1046.00,-549.60M0.00,56.07L1046.00,-547.89M0.00,57.79L1046.00,-546.17M0.00,59.50L1046.00,-544.46M0.00,62.93L1046.00,-541.03M0.00,64.64L1046.00,-539.32M0.00,66.36L1046.00,-537.60M0.00,68.07L1046.00,-535.89M0.00,71.50L1046.00,-532.46M0.00,73.21L1046.00,-530.75M0.00,74.93L1046.00,-529.03M0.00,76.64L1046.00,-527.32M0.00,80.07L1046.00,-523.89M0.00,81.78L1046.00,-522.18M0.00,83.50L1046.00,-520.46M0.00,85.21L1046.00,-518.75M0.00,88.64L1046.00,-515.32M0.00,90.35L1046.00,-513.61M0.00,92.07L1046.00,-511.89M0.00,93.78L1046.00,-510.18M0.00,97.21L1046.00,-506.75M0.00,98.92L1046.00,-505.04M0.00,100.64L1046.00,-503.32M0.00,102.35L1046.00,-501.61M0.00,105.78L1046.00,-498.18M0.00,107.49L1046.00,-496.47M0.00,109.21L1046.00,-494.75M0.00,110.92L1046.00,-493.04M0.00,114.35L1046.00,-489.61M0.00,116.06L1046.00,-487.90M0.00,117.78L1046.00,-486.18M0.00,119.49L1046.00,-484.47M0.00,122.92L1046.00,-481.04M0.00,124.63L1046.00,-479.33M0.00,126.35L1046.00,-477.61M0.00,128.06L1046.00,-475.90M0.00,131.49L1046.00,-472.47M0.00,133.20L1046.00,-470.76M0.00,134.92L1046.00,-469.04M0.00,136.63L1046.00,-467.33M0.00,140.06L1046.00,-463.90M0.00,141.77L1046.00,-462.19M0.00,143.49L1046.00,-460.47M0.00,145.20L1046.00,-458.76M0.00,148.63L1046.00,-455.33M0.00,150.34L1046.00,-453.62M0.00,152.06L1046.00,-451.90M0.00,153.77L1046.00,-450.19M0.00,157.20L1046.00,-446.76M0.00,158.91L1046.00,-445.05M0.00,160.63L1046.00,-443.33M0.00,162.34L1046.00,-441.62M0.00,165.77L1046.00,-438.19M0.00,167.48L1046.00,-436.48M0.00,169.20L1046.00,-434.76M0.00,170.91L1046.00,-433.05M0.00,174.34L1046.00,-429.62M0.00,176.05L1046.00,-427.91M0.00,177.77L1046.00,-426.19M0.00,179.48L1046.00,-424.48M0.00,182.91L1046.00,-421.05M0.00,184.62L1046.00,-419.34M0.00,186.34L1046.00,-417.62M0.00,188.05L1046.00,-415.91M0.00,191.48L1046.00,-412.48M0.00,193.19L1046.00,-410.77M0.00,194.91L1046.00,-409.05M0.00,196.62L1046.00,-407.34M0.00,200.05L1046.00,-403.91M0.00,201.76L1046.00,-402.20M0.00,203.48L1046.00,-400.48M0.00,205.19L1046.00,-398.77M0.00,208.62L1046.00,-395.34M0.00,210.33L1046.00,-393.63M0.00,212.05L1046.00,-391.91M0.00,213.76L1046.00,-390.20M0.00,217.19L1046.00,-386.77M0.00,218.90L1046.00,-385.06M0.00,220.62L1046.00,-383.34M0.00,222.33L1046.00,-381.63M0.00,225.76L1046.00,-378.20M0.00,227.47L1046.00,-376.49M0.00,229.19L1046.00,-374.77M0.00,230.90L1046.00,-373.06M0.00,234.33L1046.00,-369.63M0.00,236.04L1046.00,-367.92M0.00,237.76L1046.00,-366.20M0.00,239.47L1046.00,-364.49M0.00,242.90L1046.00,-361.06M0.00,244.61L1046.00,-359.35M0.00,246.33L1046.00,-357.63M0.00,248.04L1046.00,-355.92M0.00,251.47L1046.00,-352.49M0.00,253.18L1046.00,-350.78M0.00,254.90L1046.00,-349.06M0.00,256.61L1046.00,-347.35M0.00,260.04L1046.00,-343.92M0.00,261.75L1046.00,-342.21M0.00,263.47L1046.00,-340.49M0.00,265.18L1046.00,-338.78M0.00,268.61L1046.00,-335.35M0.00,270.32L1046.00,-333.64M0.00,272.04L1046.00,-331.92M0.00,273.75L1046.00,-330.21M0.00,277.18L1046.00,-326.78M0.00,278.89L1046.00,-325.07M0.00,280.61L1046.00,-323.35M0.00,282.32L1046.00,-321.64M0.00,285.75L1046.00,-318.21M0.00,287.46L1046.00,-316.50M0.00,289.18L1046.00,-314.78M0.00,290.89L1046.00,-313.07M0.00,294.32L1046.00,-309.64M0.00,296.03L1046.00,-307.93M0.00,297.75L1046.00,-306.21M0.00,299.46L1046.00,-304.50M0.00,302.89L1046.00,-301.07M0.00,304.60L1046.00,-299.36M0.00,306.32L1046.00,-297.64M0.00,308.03L1046.00,-295.93M0.00,311.46L1046.00,-292.50M0.00,313.17L1046.00,-290.79M0.00,314.89L1046.00,-289.07M0.00,316.60L1046.00,-287.36M0.00,320.03L1046.00,-283.93M0.00,321.74L1046.00,-282.22M0.00,323.46L1046.00,-280.50M0.00,325.17L1046.00,-278.79M0.00,328.60L1046.00,-275.36M0.00,330.31L1046.00,-273.65M0.00,332.03L1046.00,-271.93M0.00,333.74L1046.00,-270.22M0.00,337.17L1046.00,-266.79M0.00,338.88L1046.00,-265.08M0.00,340.60L1046.00,-263.36M0.00,342.31L1046.00,-261.65M0.00,345.74L1046.00,-258.22M0.00,347.45L1046.00,-256.51M0.00,349.17L1046.00,-254.79M0.00,350.88L1046.00,-253.08M0.00,354.31L1046.00,-249.65M0.00,356.02L1046.00,-247.94M0.00,357.74L1046.00,-246.22M0.00,359.45L1046.00,-244.51M0.00,362.88L1046.00,-241.08M0.00,364.59L1046.00,-239.37M0.00,366.31L1046.00,-237.65M0.00,368.02L1046.00,-235.94M0.00,371.45L1046.00,-232.51M0.00,373.16L1046.00,-230.80M0.00,374.88L1046.00,-229.08M0.00,376.59L1046.00,-227.37M0.00,380.02L1046.00,-223.94M0.00,381.73L1046.00,-222.23M0.00,383.45L1046.00,-220.51M0.00,385.16L1046.00,-218.80M0.00,388.59L1046.00,-215.37M0.00,390.30L1046.00,-213.66M0.00,392.02L1046.00,-211.94M0.00,393.73L1046.00,-210.23M0.00,397.16L1046.00,-206.80M0.00,398.87L1046.00,-205.09M0.00,400.59L1046.00,-203.37M0.00,402.30L1046.00,-201.66M0.00,405.73L1046.00,-198.23M0.00,407.44L1046.00,-196.52M0.00,409.16L1046.00,-194.80M0.00,410.87L1046.00,-193.09M0.00,414.30L1046.00,-189.66M0.00,416.01L1046.00,-187.95M0.00,417.73L1046.00,-186.23M0.00,419.44L1046.00,-184.52M0.00,422.87L1046.00,-181.09M0.00,424.58L1046.00,-179.38M0.00,426.30L1046.00,-177.66M0.00,428.01L1046.00,-175.95M0.00,431.44L1046.00,-172.52M0.00,433.15L1046.00,-170.81M0.00,434.87L1046.00,-169.09M0.00,436.58L1046.00,-167.38M0.00,440.01L1046.00,-163.95M0.00,441.72L1046.00,-162.24M0.00,443.44L1046.00,-160.52M0.00,445.15L1046.00,-158.81M0.00,448.58L1046.00,-155.38M0.00,450.29L1046.00,-153.67M0.00,452.01L1046.00,-151.95M0.00,453.72L1046.00,-150.24M0.00,457.15L1046.00,-146.81M0.00,458.86L1046.00,-145.10M0.00,460.58L1046.00,-143.38M0.00,462.29L1046.00,-141.67M0.00,465.72L1046.00,-138.24M0.00,467.43L1046.00,-136.53M0.00,469.15L1046.00,-134.81M0.00,470.86L1046.00,-133.10M0.00,474.29L1046.00,-129.67M0.00,476.00L1046.00,-127.96M0.00,477.72L1046.00,-126.24M0.00,479.43L1046.00,-124.53M0.00,482.86L1046.00,-121.10M0.00,484.57L1046.00,-119.39M0.00,486.29L1046.00,-117.67M0.00,488.00L1046.00,-115.96M0.00,491.43L1046.00,-112.53M0.00,493.14L1046.00,-110.82M0.00,494.86L1046.00,-109.10M0.00,496.57L1046.00,-107.39M0.00,500.00L1046.00,-103.96M0.00,501.71L1046.00,-102.25M0.00,503.43L1046.00,-100.53M0.00,505.14L1046.00,-98.82M0.00,508.57L1046.00,-95.39M0.00,510.28L1046.00,-93.68M0.00,512.00L1046.00,-91.96M0.00,513.71L1046.00,-90.25M0.00,517.14L1046.00,-86.82M0.00,518.85L1046.00,-85.11M0.00,520.57L1046.00,-83.39M0.00,522.28L1046.00,-81.68M0.00,525.71L1046.00,-78.25M0.00,527.42L1046.00,-76.54M0.00,529.14L1046.00,-74.82M0.00,530.85L1046.00,-73.11M0.00,534.28L1046.00,-69.68M0.00,535.99L1046.00,-67.97M0.00,537.71L1046.00,-66.25M0.00,539.42L1046.00,-64.54M0.00,542.85L1046.00,-61.11M0.00,544.56L1046.00,-59.40M0.00,546.28L1046.00,-57.68M0.00,547.99L1046.00,-55.97M0.00,551.42L1046.00,-52.54M0.00,553.13L1046.00,-50.83M0.00,554.85L1046.00,-49.11M0.00,556.56L1046.00,-47.40M0.00,559.99L1046.00,-43.97M0.00,561.70L1046.00,-42.26M0.00,563.42L1046.00,-40.54M0.00,565.13L1046.00,-38.83M0.00,568.56L1046.00,-35.40M0.00,570.27L1046.00,-33.69M0.00,571.99L1046.00,-31.97M0.00,573.70L1046.00,-30.26M0.00,577.13L1046.00,-26.83M0.00,578.84L1046.00,-25.12M0.00,580.56L1046.00,-23.40M0.00,582.27L1046.00,-21.69M0.00,585.70L1046.00,-18.26M0.00,587.41L1046.00,-16.55M0.00,589.13L1046.00,-14.83M0.00,590.84L1046.00,-13.12M0.00,594.27L1046.00,-9.69M0.00,595.98L1046.00,-7.98M0.00,597.70L1046.00,-6.26M0.00,599.41L1046.00,-4.55M0.00,602.84L1046.00,-1.12M0.00,604.55L1046.00,0.59M0.00,606.27L1046.00,2.31M0.00,607.98L1046.00,4.02M0.00,611.41L1046.00,7.45M0.00,613.12L1046.00,9.16M0.00,614.84L1046.00,10.88M0.00,616.55L1046.00,12.59M0.00,619.98L1046.00,16.02M0.00,621.69L1046.00,17.73M0.00,623.41L1046.00,19.45M0.00,625.12L1046.00,21.16M0.00,628.55L1046.00,24.59M0.00,630.26L1046.00,26.30M0.00,631.98L1046.00,28.02M0.00,633.69L1046.00,29.73M0.00,637.12L1046.00,33.16M0.00,638.83L1046.00,34.87M0.00,640.55L1046.00,36.59M0.00,642.26L1046.00,38.30M0.00,645.69L1046.00,41.73M0.00,647.40L1046.00,43.44M0.00,649.12L1046.00,45.16M0.00,650.83L1046.00,46.87M0.00,654.26L1046.00,50.30M0.00,655.97L1046.00,52.01M0.00,657.69L1046.00,53.73M0.00,659.40L1046.00,55.44M0.00,662.83L1046.00,58.87M0.00,664.54L1046.00,60.58M0.00,666.26L1046.00,62.30M0.00,667.97L1046.00,64.01M0.00,671.40L1046.00,67.44M0.00,673.11L1046.00,69.15M0.00,674.83L1046.00,70.87M0.00,676.54L1046.00,72.58M0.00,679.97L1046.00,76.01M0.00,681.68L1046.00,77.72M0.00,683.40L1046.00,79.44M0.00,685.11L1046.00,81.15M0.00,688.54L1046.00,84.58M0.00,690.25L1046.00,86.29M0.00,691.97L1046.00,88.01M0.00,693.68L1046.00,89.72M0.00,697.11L1046.00,93.15M0.00,698.82L1046.00,94.86M0.00,700.54L1046.00,96.58M0.00,702.25L1046.00,98.29M0.00,705.68L1046.00,101.72M0.00,707.39L1046.00,103.43M0.00,709.11L1046.00,105.15M0.00,710.82L1046.00,106.86M0.00,714.25L1046.00,110.29M0.00,715.96L1046.00,112.00M0.00,717.68L1046.00,113.72M0.00,719.39L1046.00,115.43M0.00,722.82L1046.00,118.86M0.00,724.53L1046.00,120.57M0.00,726.25L1046.00,122.29M0.00,727.96L1046.00,124.00M0.00,731.39L1046.00,127.43M0.00,733.10L1046.00,129.14M0.00,734.82L1046.00,130.86M0.00,736.53L1046.00,132.57M0.00,739.96L1046.00,136.00M0.00,741.67L1046.00,137.71M0.00,743.39L1046.00,139.43M0.00,745.10L1046.00,141.14M0.00,748.53L1046.00,144.57M0.00,750.24L1046.00,146.28M0.00,751.96L1046.00,148.00M0.00,753.67L1046.00,149.71M0.00,757.10L1046.00,153.14M0.00,758.81L1046.00,154.85M0.00,760.53L1046.00,156.57M0.00,762.24L1046.00,158.28M0.00,765.67L1046.00,161.71M0.00,767.38L1046.00,163.42M0.00,769.10L1046.00,165.14M0.00,770.81L1046.00,166.85M0.00,774.24L1046.00,170.28M0.00,775.95L1046.00,171.99M0.00,777.67L1046.00,173.71M0.00,779.38L1046.00,175.42M0.00,782.81L1046.00,178.85M0.00,784.52L1046.00,180.56M0.00,786.24L1046.00,182.28M0.00,787.95L1046.00,183.99M0.00,791.38L1046.00,187.42M0.00,793.09L1046.00,189.13M0.00,794.81L1046.00,190.85M0.00,796.52L1046.00,192.56M0.00,799.95L1046.00,195.99M0.00,801.66L1046.00,197.70M0.00,803.38L1046.00,199.42M0.00,805.09L1046.00,201.13M0.00,808.52L1046.00,204.56M0.00,810.23L1046.00,206.27M0.00,811.95L1046.00,207.99M0.00,813.66L1046.00,209.70M0.00,817.09L1046.00,213.13M0.00,818.80L1046.00,214.84M0.00,820.52L1046.00,216.56M0.00,822.23L1046.00,218.27M0.00,825.66L1046.00,221.70M0.00,827.37L1046.00,223.41M0.00,829.09L1046.00,225.13M0.00,830.80L1046.00,226.84M0.00,834.23L1046.00,230.27M0.00,835.94L1046.00,231.98M0.00,837.66L1046.00,233.70M0.00,839.37L1046.00,235.41M0.00,842.80L1046.00,238.84M0.00,844.51L1046.00,240.55M0.00,846.23L1046.00,242.27M0.00,847.94L1046.00,243.98M0.00,851.37L1046.00,247.41M0.00,853.08L1046.00,249.12M0.00,854.80L1046.00,250.84M0.00,856.51L1046.00,252.55M0.00,859.94L1046.00,255.98M0.00,861.65L1046.00,257.69M0.00,863.37L1046.00,259.41M0.00,865.08L1046.00,261.12M0.00,868.51L1046.00,264.55M0.00,870.22L1046.00,266.26M0.00,871.94L1046.00,267.98M0.00,873.65L1046.00,269.69M0.00,877.08L1046.00,273.12M0.00,878.79L1046.00,274.83M0.00,880.51L1046.00,276.55M0.00,882.22L1046.00,278.26M0.00,885.65L1046.00,281.69M0.00,887.36L1046.00,283.40M0.00,889.08L1046.00,285.12M0.00,890.79L1046.00,286.83M0.00,894.22L1046.00,290.26M0.00,895.93L1046.00,291.97M0.00,897.65L1046.00,293.69M0.00,899.36L1046.00,295.40M0.00,902.79L1046.00,298.83M0.00,904.50L1046.00,300.54M0.00,906.22L1046.00,302.26M0.00,907.93L1046.00,303.97M0.00,911.36L1046.00,307.40M0.00,913.07L1046.00,309.11M0.00,914.79L1046.00,310.83M0.00,916.50L1046.00,312.54M0.00,919.93L1046.00,315.97M0.00,921.64L1046.00,317.68M0.00,923.36L1046.00,319.40M0.00,925.07L1046.00,321.11M0.00,928.50L1046.00,324.54M0.00,930.21L1046.00,326.25M0.00,931.93L1046.00,327.97M0.00,933.64L1046.00,329.68M0.00,937.07L1046.00,333.11M0.00,938.78L1046.00,334.82M0.00,940.50L1046.00,336.54M0.00,942.21L1046.00,338.25M0.00,945.64L1046.00,341.68M0.00,947.35L1046.00,343.39M0.00,949.07L1046.00,345.11M0.00,950.78L1046.00,346.82M0.00,954.21L1046.00,350.25M0.00,955.92L1046.00,351.96M0.00,957.64L1046.00,353.68M0.00,959.35L1046.00,355.39M0.00,962.78L1046.00,358.82M0.00,964.49L1046.00,360.53M0.00,966.21L1046.00,362.25M0.00,967.92L1046.00,363.96M0.00,971.35L1046.00,367.39M0.00,973.06L1046.00,369.10M0.00,974.78L1046.00,370.82M0.00,976.49L1046.00,372.53M0.00,979.92L1046.00,375.96M0.00,981.63L1046.00,377.67M0.00,983.35L1046.00,379.39M0.00,985.06L1046.00,381.10M0.00,988.49L1046.00,384.53M0.00,990.20L1046.00,386.24M0.00,991.92L1046.00,387.96M0.00,993.63L1046.00,389.67M0.00,997.06L1046.00,393.10M0.00,998.77L1046.00,394.81M0.00,1000.49L1046.00,396.53M0.00,1002.20L1046.00,398.24M0.00,1005.63L1046.00,401.67M0.00,1007.34L1046.00,403.38M0.00,1009.06L1046.00,405.10M0.00,1010.77L1046.00,406.81M0.00,1014.20L1046.00,410.24M0.00,1015.91L1046.00,411.95M0.00,1017.63L1046.00,413.67M0.00,1019.34L1046.00,415.38M0.00,1022.77L1046.00,418.81M0.00,1024.48L1046.00,420.52M0.00,1026.20L1046.00,422.24M0.00,1027.91L1046.00,423.95M0.00,1031.34L1046.00,427.38M0.00,1033.05L1046.00,429.09M0.00,1034.77L1046.00,430.81M0.00,1036.48L1046.00,432.52M0.00,1039.91L1046.00,435.95M0.00,1041.62L1046.00,437.66M0.00,1043.34L1046.00,439.38M0.00,1045.05L1046.00,441.09M0.00,1048.48L1046.00,444.52M0.00,1050.19L1046.00,446.23M0.00,1051.91L1046.00,447.95M0.00,1053.62L1046.00,449.66M0.00,1057.05L1046.00,453.09M0.00,1058.76L1046.00,454.80M0.00,1060.48L1046.00,456.52M0.00,1062.19L1046.00,458.23M0.00,1065.62L1046.00,461.66M0.00,1067.33L1046.00,463.37M0.00,1069.05L1046.00,465.09M0.00,1070.76L1046.00,466.80M0.00,1074.19L1046.00,470.23M0.00,1075.90L1046.00,471.94M0.00,1077.62L1046.00,473.66M0.00,1079.33L1046.00,475.37M0.00,1082.76L1046.00,478.80M0.00,1084.47L1046.00,480.51M0.00,1086.19L1046.00,482.23M0.00,1087.90L1046.00,483.94M0.00,1091.33L1046.00,487.37M0.00,1093.04L1046.00,489.08M0.00,1094.76L1046.00,490.80M0.00,1096.47L1046.00,492.51M0.00,1099.90L1046.00,495.94M0.00,1101.61L1046.00,497.65M0.00,1103.33L1046.00,499.37M0.00,1105.04L1046.00,501.08M0.00,1108.47L1046.00,504.51M0.00,1110.18L1046.00,506.22M0.00,1111.90L1046.00,507.94M0.00,1113.61L1046.00,509.65M0.00,1117.04L1046.00,513.08M0.00,1118.75L1046.00,514.79M0.00,1120.47L1046.00,516.51M0.00,1122.18L1046.00,518.22M0.00,1125.61L1046.00,521.65M0.00,1127.32L1046.00,523.36M0.00,1129.04L1046.00,525.08M0.00,1130.75L1046.00,526.79M0.00,1134.18L1046.00,530.22M0.00,1135.89L1046.00,531.93M0.00,1137.61L1046.00,533.65M0.00,1139.32L1046.00,535.36M0.00,1142.75L1046.00,538.79M0.00,1144.46L1046.00,540.50M0.00,1146.18L1046.00,542.22M0.00,1147.89L1046.00,543.93M0.00,1151.32L1046.00,547.36M0.00,1153.03L1046.00,549.07M0.00,1154.75L1046.00,550.79M0.00,1156.46L1046.00,552.50M0.00,1159.89L1046.00,555.93M0.00,1161.60L1046.00,557.64M0.00,1163.32L1046.00,559.36M0.00,1165.03L1046.00,561.07M0.00,1168.46L1046.00,564.50M0.00,1170.17L1046.00,566.21M0.00,1171.89L1046.00,567.93M0.00,1173.60L1046.00,569.64M0.00,1177.03L1046.00,573.07M0.00,1178.74L1046.00,574.78M0.00,1180.46L1046.00,576.50M0.00,1182.17L1046.00,578.21M0.00,1185.60L1046.00,581.64M0.00,1187.31L1046.00,583.35M0.00,1189.03L1046.00,585.07M0.00,1190.74L1046.00,586.78M0.00,1194.17L1046.00,590.21M0.00,1195.88L1046.00,591.92M0.00,1197.60L1046.00,593.64M0.00,1199.31L1046.00,595.35M0.00,1202.74L1046.00,598.78M0.00,1204.45L1046.00,600.49M0.00,1206.17L1046.00,602.21M0.00,1207.88L1046.00,603.92M0.00,1211.31L1046.00,607.35M0.00,1213.02L1046.00,609.06M0.00,1214.74L1046.00,610.78M0.00,1216.45L1046.00,612.49M0.00,1219.88L1046.00,615.92M0.00,1221.59L1046.00,617.63M0.00,1223.31L1046.00,619.35M0.00,1225.02L1046.00,621.06M0.00,1228.45L1046.00,624.49M0.00,1230.16L1046.00,626.20M0.00,1231.88L1046.00,627.92M0.00,1233.59L1046.00,629.63M0.00,1237.02L1046.00,633.06M0.00,1238.73L1046.00,634.77M0.00,1240.45L1046.00,636.49M0.00,1242.16L1046.00,638.20M0.00,1245.59L1046.00,641.63M0.00,1247.30L1046.00,643.34M0.00,1249.02L1046.00,645.06M0.00,1250.73L1046.00,646.77M0.00,1254.16L1046.00,650.20M0.00,1255.87L1046.00,651.91M0.00,1257.59L1046.00,653.63M0.00,1259.30L1046.00,655.34M0.00,1262.73L1046.00,658.77M0.00,1264.44L1046.00,660.48M0.00,1266.16L1046.00,662.20M0.00,1267.87L1046.00,663.91M0.00,1271.30L1046.00,667.34M0.00,1273.01L1046.00,669.05M0.00,1274.73L1046.00,670.77M0.00,1276.44L1046.00,672.48M0.00,1279.87L1046.00,675.91M0.00,1281.58L1046.00,677.62M0.00,1283.30L1046.00,679.34M0.00,1285.01L1046.00,681.05M0.00,1288.44L1046.00,684.48M0.00,1290.15L1046.00,686.19M0.00,1291.87L1046.00,687.91M0.00,1293.58L1046.00,689.62M0.00,1297.01L1046.00,693.05M0.00,1298.72L1046.00,694.76M0.00,1300.44L1046.00,696.48M0.00,1302.15L1046.00,698.19M0.00,1305.58L1046.00,701.62M0.00,1307.29L1046.00,703.33M0.00,1309.01L1046.00,705.05M0.00,1310.72L1046.00,706.76M0.00,1314.15L1046.00,710.19M0.00,1315.86L1046.00,711.90M0.00,1317.58L1046.00,713.62M0.00,1319.29L1046.00,715.33M0.00,1322.72L1046.00,718.76M0.00,1324.43L1046.00,720.47M0.00,1326.15L1046.00,722.19M0.00,1327.86L1046.00,723.90M0.00,1331.29L1046.00,727.33M0.00,1333.00L1046.00,729.04M0.00,1334.72L1046.00,730.76M0.00,1336.43L1046.00,732.47M0.00,1339.86L1046.00,735.90M0.00,1341.57L1046.00,737.61M0.00,1343.29L1046.00,739.33M0.00,1345.00L1046.00,741.04M0.00,1348.43L1046.00,744.47M0.00,1350.14L1046.00,746.18M0.00,1351.86L1046.00,747.90M0.00,1353.57L1046.00,749.61M0.00,1357.00L1046.00,753.04M0.00,1358.71L1046.00,754.75M0.00,1360.43L1046.00,756.47M0.00,1362.14L1046.00,758.18M0.00,1365.57L1046.00,761.61M0.00,1367.28L1046.00,763.32M0.00,1369.00L1046.00,765.04M0.00,1370.71L1046.00,766.75M0.00,1374.14L1046.00,770.18M0.00,1375.85L1046.00,771.89M0.00,1377.57L1046.00,773.61M0.00,1379.28L1046.00,775.32M0.00,1382.71L1046.00,778.75M0.00,1384.42L1046.00,780.46M0.00,1386.14L1046.00,782.18M0.00,1387.85L1046.00,783.89M0.00,1391.28L1046.00,787.32M0.00,1392.99L1046.00,789.03M0.00,1394.71L1046.00,790.75M0.00,1396.42L1046.00,792.46M0.00,1399.85L1046.00,795.89M0.00,1401.56L1046.00,797.60M0.00,1403.28L1046.00,799.32M0.00,1404.99L1046.00,801.03M0.00,1408.42L1046.00,804.46M0.00,1410.13L1046.00,806.17M0.00,1411.85L1046.00,807.89M0.00,1413.56L1046.00,809.60M0.00,1416.99L1046.00,813.03M0.00,1418.70L1046.00,814.74M0.00,1420.42L1046.00,816.46M0.00,1422.13L1046.00,818.17M0.00,1425.56L1046.00,821.60M0.00,1427.27L1046.00,823.31M0.00,1428.99L1046.00,825.03M0.00,1430.70L1046.00,826.74M0.00,1434.13L1046.00,830.17M0.00,1435.84L1046.00,831.88M0.00,1437.56L1046.00,833.60M0.00,1439.27L1046.00,835.31M0.00,1442.70L1046.00,838.74M0.00,1444.41L1046.00,840.45M0.00,1446.13L1046.00,842.17M0.00,1447.84L1046.00,843.88M0.00,1451.27L1046.00,847.31M0.00,1452.98L1046.00,849.02M0.00,1454.70L1046.00,850.74M0.00,1456.41L1046.00,852.45M0.00,1459.84L1046.00,855.88M0.00,1461.55L1046.00,857.59M0.00,1463.27L1046.00,859.31M0.00,1464.98L1046.00,861.02M0.00,1468.41L1046.00,864.45M0.00,1470.12L1046.00,866.16M0.00,1471.84L1046.00,867.88M0.00,1473.55L1046.00,869.59M0.00,1476.98L1046.00,873.02M0.00,1478.69L1046.00,874.73M0.00,1480.41L1046.00,876.45M0.00,1482.12L1046.00,878.16M0.00,1485.55L1046.00,881.59M0.00,1487.26L1046.00,883.30M0.00,1488.98L1046.00,885.02M0.00,1490.69L1046.00,886.73M0.00,1494.12L1046.00,890.16M0.00,1495.83L1046.00,891.87M0.00,1497.55L1046.00,893.59M0.00,1499.26L1046.00,895.30M0.00,1502.69L1046.00,898.73M0.00,1504.40L1046.00,900.44M0.00,1506.12L1046.00,902.16M0.00,1507.83L1046.00,903.87M0.00,1511.26L1046.00,907.30M0.00,1512.97L1046.00,909.01M0.00,1514.69L1046.00,910.73M0.00,1516.40L1046.00,912.44M0.00,1519.83L1046.00,915.87M0.00,1521.54L1046.00,917.58M0.00,1523.26L1046.00,919.30M0.00,1524.97L1046.00,921.01M0.00,1528.40L1046.00,924.44M0.00,1530.11L1046.00,926.15M0.00,1531.83L1046.00,927.87M0.00,1533.54L1046.00,929.58M0.00,1536.97L1046.00,933.01M0.00,1538.68L1046.00,934.72M0.00,1540.40L1046.00,936.44M0.00,1542.11L1046.00,938.15M0.00,1545.54L1046.00,941.58M0.00,1547.25L1046.00,943.29M0.00,1548.97L1046.00,945.01M0.00,1550.68L1046.00,946.72M0.00,1554.11L1046.00,950.15M0.00,1555.82L1046.00,951.86M0.00,1557.54L1046.00,953.58M0.00,1559.25L1046.00,955.29M0.00,1562.68L1046.00,958.72M0.00,1564.39L1046.00,960.43M0.00,1566.11L1046.00,962.15M0.00,1567.82L1046.00,963.86M0.00,1571.25L1046.00,967.29M0.00,1572.96L1046.00,969.00M0.00,1574.68L1046.00,970.72M0.00,1576.39L1046.00,972.43M0.00,1579.82L1046.00,975.86M0.00,1581.53L1046.00,977.57M0.00,1583.25L1046.00,979.29M0.00,1584.96L1046.00,981.00M0.00,1588.39L1046.00,984.43M0.00,1590.10L1046.00,986.14M0.00,1591.82L1046.00,987.86M0.00,1593.53L1046.00,989.57M0.00,1596.96L1046.00,993.00M0.00,1598.67L1046.00,994.71M0.00,1600.39L1046.00,996.43M0.00,1602.10L1046.00,998.14M0.00,1605.53L1046.00,1001.57M0.00,1607.24L1046.00,1003.28M0.00,1608.96L1046.00,1005.00M0.00,1610.67L1046.00,1006.71M0.00,1614.10L1046.00,1010.14M0.00,1615.81L1046.00,1011.85M0.00,1617.53L1046.00,1013.57M0.00,1619.24L1046.00,1015.28M0.00,1622.67L1046.00,1018.71M0.00,1624.38L1046.00,1020.42M0.00,1626.10L1046.00,1022.14M0.00,1627.81L1046.00,1023.85M0.00,1631.24L1046.00,1027.28M0.00,1632.95L1046.00,1028.99M0.00,1634.67L1046.00,1030.71M0.00,1636.38L1046.00,1032.42M0.00,1639.81L1046.00,1035.85M0.00,1641.52L1046.00,1037.56M0.00,1643.24L1046.00,1039.28M0.00,1644.95L1046.00,1040.99M0.00,1648.38L1046.00,1044.42M0.00,1650.09L1046.00,1046.13M0.00,1651.81L1046.00,1047.85M0.00,1653.52L1046.00,1049.56M0.00,1656.95L1046.00,1052.99M0.00,1658.66L1046.00,1054.70M0.00,1660.38L1046.00,1056.42M0.00,1662.09L1046.00,1058.13M0.00,1665.52L1046.00,1061.56M0.00,1667.23L1046.00,1063.27M0.00,1668.95L1046.00,1064.99M0.00,1670.66L1046.00,1066.70M0.00,1674.09L1046.00,1070.13M0.00,1675.80L1046.00,1071.84M0.00,1677.52L1046.00,1073.56M0.00,1679.23L1046.00,1075.27M0.00,1682.66L1046.00,1078.70M0.00,1684.37L1046.00,1080.41M0.00,1686.09L1046.00,1082.13M0.00,1687.80L1046.00,1083.84M0.00,1691.23L1046.00,1087.27M0.00,1692.94L1046.00,1088.98M0.00,1694.66L1046.00,1090.70M0.00,1696.37L1046.00,1092.41M0.00,1699.80L1046.00,1095.84M0.00,1701.51L1046.00,1097.55M0.00,1703.23L1046.00,1099.27M0.00,1704.94L1046.00,1100.98" stroke="#000" stroke-opacity="0.02" stroke-width="1" fill="none"/>
<path d="M0.00,-995.53L1046.00,-391.57M0.00,-978.39L1046.00,-374.43M0.00,-961.25L1046.00,-357.29M0.00,-944.11L1046.00,-340.15M0.00,-926.97L1046.00,-323.01M0.00,-909.83L1046.00,-305.87M0.00,-892.69L1046.00,-288.73M0.00,-875.55L1046.00,-271.59M0.00,-858.41L1046.00,-254.45M0.00,-841.27L1046.00,-237.31M0.00,-824.13L1046.00,-220.17M0.00,-806.99L1046.00,-203.03M0.00,-789.85L1046.00,-185.89M0.00,-772.71L1046.00,-168.75M0.00,-755.57L1046.00,-151.61M0.00,-738.43L1046.00,-134.47M0.00,-721.29L1046.00,-117.33M0.00,-704.15L1046.00,-100.19M0.00,-687.01L1046.00,-83.05M0.00,-669.87L1046.00,-65.91M0.00,-652.73L1046.00,-48.77M0.00,-635.59L1046.00,-31.63M0.00,-618.45L1046.00,-14.49M0.00,-601.31L1046.00,2.65M0.00,-584.17L1046.00,19.79M0.00,-567.03L1046.00,36.93M0.00,-549.89L1046.00,54.07M0.00,-532.75L1046.00,71.21M0.00,-515.61L1046.00,88.35M0.00,-498.47L1046.00,105.49M0.00,-481.33L1046.00,122.63M0.00,-464.19L1046.00,139.77M0.00,-447.05L1046.00,156.91M0.00,-429.91L1046.00,174.05M0.00,-412.77L1046.00,191.19M0.00,-395.63L1046.00,208.33M0.00,-378.49L1046.00,225.47M0.00,-361.35L1046.00,242.61M0.00,-344.21L1046.00,259.75M0.00,-327.07L1046.00,276.89M0.00,-309.93L1046.00,294.03M0.00,-292.79L1046.00,311.17M0.00,-275.65L1046.00,328.31M0.00,-258.51L1046.00,345.45M0.00,-241.37L1046.00,362.59M0.00,-224.23L1046.00,379.73M0.00,-207.09L1046.00,396.87M0.00,-189.95L1046.00,414.01M0.00,-172.81L1046.00,431.15M0.00,-155.67L1046.00,448.29M0.00,-138.53L1046.00,465.43M0.00,-121.39L1046.00,482.57M0.00,-104.25L1046.00,499.71M0.00,-87.11L1046.00,516.85M0.00,-69.97L1046.00,533.99M0.00,-52.83L1046.00,551.13M0.00,-35.69L1046.00,568.27M0.00,-18.55L1046.00,585.41M0.00,-1.41L1046.00,602.55M0.00,15.73L1046.00,619.69M0.00,32.87L1046.00,636.83M0.00,50.01L1046.00,653.97M0.00,67.15L1046.00,671.11M0.00,84.29L1046.00,688.25M0.00,101.43L1046.00,705.39M0.00,118.57L1046.00,722.53M0.00,135.71L1046.00,739.67M0.00,152.85L1046.00,756.81M0.00,169.99L1046.00,773.95M0.00,187.13L1046.00,791.09M0.00,204.27L1046.00,808.23M0.00,221.41L1046.00,825.37M0.00,238.55L1046.00,842.51M0.00,255.69L1046.00,859.65M0.00,272.83L1046.00,876.79M0.00,289.97L1046.00,893.93M0.00,307.11L1046.00,911.07M0.00,324.25L1046.00,928.21M0.00,341.39L1046.00,945.35M0.00,358.53L1046.00,962.49M0.00,375.67L1046.00,979.63M0.00,392.81L1046.00,996.77M0.00,409.95L1046.00,1013.91M0.00,427.09L1046.00,1031.05M0.00,444.23L1046.00,1048.19M0.00,461.37L1046.00,1065.33M0.00,478.51L1046.00,1082.47M0.00,495.65L1046.00,1099.61M0.00,512.79L1046.00,1116.75M0.00,529.93L1046.00,1133.89M0.00,547.07L1046.00,1151.03M0.00,564.21L1046.00,1168.17M0.00,581.35L1046.00,1185.31M0.00,598.49L1046.00,1202.45M0.00,615.63L1046.00,1219.59M0.00,632.77L1046.00,1236.73M0.00,649.91L1046.00,1253.87M0.00,667.05L1046.00,1271.01M0.00,684.19L1046.00,1288.15M0.00,701.33L1046.00,1305.29M0.00,718.47L1046.00,1322.43M0.00,735.61L1046.00,1339.57M0.00,752.75L1046.00,1356.71M0.00,769.89L1046.00,1373.85M0.00,787.03L1046.00,1390.99M0.00,804.17L1046.00,1408.13M0.00,821.31L1046.00,1425.27M0.00,838.45L1046.00,1442.41M0.00,855.59L1046.00,1459.55M0.00,872.73L1046.00,1476.69M0.00,889.87L1046.00,1493.83M0.00,907.01L1046.00,1510.97M0.00,924.15L1046.00,1528.11M0.00,941.29L1046.00,1545.25M0.00,958.43L1046.00,1562.39M0.00,975.57L1046.00,1579.53M0.00,992.71L1046.00,1596.67M0.00,1009.85L1046.00,1613.81M0.00,1026.99L1046.00,1630.95M0.00,1044.13L1046.00,1648.09M0.00,1061.27L1046.00,1665.23M0.00,1078.41L1046.00,1682.37M0.00,1095.55L1046.00,1699.51M0.00,1112.69L1046.00,1716.65M0.00,1129.83L1046.00,1733.79M0.00,1146.97L1046.00,1750.93M0.00,1164.11L1046.00,1768.07M0.00,1181.25L1046.00,1785.21M0.00,1198.39L1046.00,1802.35M0.00,1215.53L1046.00,1819.49M0.00,1232.67L1046.00,1836.63M0.00,1249.81L1046.00,1853.77M0.00,1266.95L1046.00,1870.91M0.00,1284.09L1046.00,1888.05M0.00,1301.23L1046.00,1905.19M0.00,1318.37L1046.00,1922.33M0.00,1335.51L1046.00,1939.47M0.00,1352.65L1046.00,1956.61M0.00,1369.79L1046.00,1973.75M0.00,1386.93L1046.00,1990.89M0.00,1404.07L1046.00,2008.03M0.00,1421.21L1046.00,2025.17M0.00,1438.35L1046.00,2042.31M0.00,1455.49L1046.00,2059.45M0.00,1472.63L1046.00,2076.59M0.00,1489.77L1046.00,2093.73M0.00,-744.37L1046.00,-1348.33M0.00,-727.23L1046.00,-1331.19M0.00,-710.09L1046.00,-1314.05M0.00,-692.95L1046.00,-1296.91M0.00,-675.81L1046.00,-1279.77M0.00,-658.67L1046.00,-1262.63M0.00,-641.53L1046.00,-1245.49M0.00,-624.39L1046.00,-1228.35M0.00,-607.25L1046.00,-1211.21M0.00,-590.11L1046.00,-1194.07M0.00,-572.97L1046.00,-1176.93M0.00,-555.83L1046.00,-1159.79M0.00,-538.69L1046.00,-1142.65M0.00,-521.55L1046.00,-1125.51M0.00,-504.41L1046.00,-1108.37M0.00,-487.27L1046.00,-1091.23M0.00,-470.13L1046.00,-1074.09M0.00,-452.99L1046.00,-1056.95M0.00,-435.85L1046.00,-1039.81M0.00,-418.71L1046.00,-1022.67M0.00,-401.57L1046.00,-1005.53M0.00,-384.43L1046.00,-988.39M0.00,-367.29L1046.00,-971.25M0.00,-350.15L1046.00,-954.11M0.00,-333.01L1046.00,-936.97M0.00,-315.87L1046.00,-919.83M0.00,-298.73L1046.00,-902.69M0.00,-281.59L1046.00,-885.55M0.00,-264.45L1046.00,-868.41M0.00,-247.31L1046.00,-851.27M0.00,-230.17L1046.00,-834.13M0.00,-213.03L1046.00,-816.99M0.00,-195.89L1046.00,-799.85M0.00,-178.75L1046.00,-782.71M0.00,-161.61L1046.00,-765.57M0.00,-144.47L1046.00,-748.43M0.00,-127.33L1046.00,-731.29M0.00,-110.19L1046.00,-714.15M0.00,-93.05L1046.00,-697.01M0.00,-75.91L1046.00,-679.87M0.00,-58.77L1046.00,-662.73M0.00,-41.63L1046.00,-645.59M0.00,-24.49L1046.00,-628.45M0.00,-7.35L1046.00,-611.31M0.00,9.79L1046.00,-594.17M0.00,26.93L1046.00,-577.03M0.00,44.07L1046.00,-559.89M0.00,61.21L1046.00,-542.75M0.00,78.35L1046.00,-525.61M0.00,95.49L1046.00,-508.47M0.00,112.63L1046.00,-491.33M0.00,129.77L1046.00,-474.19M0.00,146.91L1046.00,-457.05M0.00,164.05L1046.00,-439.91M0.00,181.19L1046.00,-422.77M0.00,198.33L1046.00,-405.63M0.00,215.47L1046.00,-388.49M0.00,232.61L1046.00,-371.35M0.00,249.75L1046.00,-354.21M0.00,266.89L1046.00,-337.07M0.00,284.03L1046.00,-319.93M0.00,301.17L1046.00,-302.79M0.00,318.31L1046.00,-285.65M0.00,335.45L1046.00,-268.51M0.00,352.59L1046.00,-251.37M0.00,369.73L1046.00,-234.23M0.00,386.87L1046.00,-217.09M0.00,404.01L1046.00,-199.95M0.00,421.15L1046.00,-182.81M0.00,438.29L1046.00,-165.67M0.00,455.43L1046.00,-148.53M0.00,472.57L1046.00,-131.39M0.00,489.71L1046.00,-114.25M0.00,506.85L1046.00,-97.11M0.00,523.99L1046.00,-79.97M0.00,541.13L1046.00,-62.83M0.00,558.27L1046.00,-45.69M0.00,575.41L1046.00,-28.55M0.00,592.55L1046.00,-11.41M0.00,609.69L1046.00,5.73M0.00,626.83L1046.00,22.87M0.00,643.97L1046.00,40.01M0.00,661.11L1046.00,57.15M0.00,678.25L1046.00,74.29M0.00,695.39L1046.00,91.43M0.00,712.53L1046.00,108.57M0.00,729.67L1046.00,125.71M0.00,746.81L1046.00,142.85M0.00,763.95L1046.00,159.99M0.00,781.09L1046.00,177.13M0.00,798.23L1046.00,194.27M0.00,815.37L1046.00,211.41M0.00,832.51L1046.00,228.55M0.00,849.65L1046.00,245.69M0.00,866.79L1046.00,262.83M0.00,883.93L1046.00,279.97M0.00,901.07L1046.00,297.11M0.00,918.21L1046.00,314.25M0.00,935.35L1046.00,331.39M0.00,952.49L1046.00,348.53M0.00,969.63L1046.00,365.67M0.00,986.77L1046.00,382.81M0.00,1003.91L1046.00,399.95M0.00,1021.05L1046.00,417.09M0.00,1038.19L1046.00,434.23M0.00,1055.33L1046.00,451.37M0.00,1072.47L1046.00,468.51M0.00,1089.61L1046.00,485.65M0.00,1106.75L1046.00,502.79M0.00,1123.89L1046.00,519.93M0.00,1141.03L1046.00,537.07M0.00,1158.17L1046.00,554.21M0.00,1175.31L1046.00,571.35M0.00,1192.45L1046.00,588.49M0.00,1209.59L1046.00,605.63M0.00,1226.73L1046.00,622.77M0.00,1243.87L1046.00,639.91M0.00,1261.01L1046.00,657.05M0.00,1278.15L1046.00,674.19M0.00,1295.29L1046.00,691.33M0.00,1312.43L1046.00,708.47M0.00,1329.57L1046.00,725.61M0.00,1346.71L1046.00,742.75M0.00,1363.85L1046.00,759.89M0.00,1380.99L1046.00,777.03M0.00,1398.13L1046.00,794.17M0.00,1415.27L1046.00,811.31M0.00,1432.41L1046.00,828.45M0.00,1449.55L1046.00,845.59M0.00,1466.69L1046.00,862.73M0.00,1483.83L1046.00,879.87M0.00,1500.97L1046.00,897.01M0.00,1518.11L1046.00,914.15M0.00,1535.25L1046.00,931.29M0.00,1552.39L1046.00,948.43M0.00,1569.53L1046.00,965.57M0.00,1586.67L1046.00,982.71M0.00,1603.81L1046.00,999.85M0.00,1620.95L1046.00,1016.99M0.00,1638.09L1046.00,1034.13M0.00,1655.23L1046.00,1051.27M0.00,1672.37L1046.00,1068.41M0.00,1689.51L1046.00,1085.55M0.00,1706.65L1046.00,1102.69M0.00,1723.79L1046.00,1119.83M0.00,1740.93L1046.00,1136.97" stroke="#000" stroke-opacity="0.05" stroke-width="1" fill="none"/>
<path d="M0.00,-1004.10L1046.00,-400.14M0.00,-986.96L1046.00,-383.00M0.00,-969.82L1046.00,-365.86M0.00,-952.68L1046.00,-348.72M0.00,-935.54L1046.00,-331.58M0.00,-918.40L1046.00,-314.44M0.00,-901.26L1046.00,-297.30M0.00,-884.12L1046.00,-280.16M0.00,-866.98L1046.00,-263.02M0.00,-849.84L1046.00,-245.88M0.00,-832.70L1046.00,-228.74M0.00,-815.56L1046.00,-211.60M0.00,-798.42L1046.00,-194.46M0.00,-781.28L1046.00,-177.32M0.00,-764.14L1046.00,-160.18M0.00,-747.00L1046.00,-143.04M0.00,-729.86L1046.00,-125.90M0.00,-712.72L1046.00,-108.76M0.00,-695.58L1046.00,-91.62M0.00,-678.44L1046.00,-74.48M0.00,-661.30L1046.00,-57.34M0.00,-644.16L1046.00,-40.20M0.00,-627.02L1046.00,-23.06M0.00,-609.88L1046.00,-5.92M0.00,-592.74L1046.00,11.22M0.00,-575.60L1046.00,28.36M0.00,-558.46L1046.00,45.50M0.00,-541.32L1046.00,62.64M0.00,-524.18L1046.00,79.78M0.00,-507.04L1046.00,96.92M0.00,-489.90L1046.00,114.06M0.00,-472.76L1046.00,131.20M0.00,-455.62L1046.00,148.34M0.00,-438.48L1046.00,165.48M0.00,-421.34L1046.00,182.62M0.00,-404.20L1046.00,199.76M0.00,-387.06L1046.00,216.90M0.00,-369.92L1046.00,234.04M0.00,-352.78L1046.00,251.18M0.00,-335.64L1046.00,268.32M0.00,-318.50L1046.00,285.46M0.00,-301.36L1046.00,302.60M0.00,-284.22L1046.00,319.74M0.00,-267.08L1046.00,336.88M0.00,-249.94L1046.00,354.02M0.00,-232.80L1046.00,371.16M0.00,-215.66L1046.00,388.30M0.00,-198.52L1046.00,405.44M0.00,-181.38L1046.00,422.58M0.00,-164.24L1046.00,439.72M0.00,-147.10L1046.00,456.86M0.00,-129.96L1046.00,474.00M0.00,-112.82L1046.00,491.14M0.00,-95.68L1046.00,508.28M0.00,-78.54L1046.00,525.42M0.00,-61.40L1046.00,542.56M0.00,-44.26L1046.00,559.70M0.00,-27.12L1046.00,576.84M0.00,-9.98L1046.00,593.98M0.00,7.16L1046.00,611.12M0.00,24.30L1046.00,628.26M0.00,41.44L1046.00,645.40M0.00,58.58L1046.00,662.54M0.00,75.72L1046.00,679.68M0.00,92.86L1046.00,696.82M0.00,110.00L1046.00,713.96M0.00,127.14L1046.00,731.10M0.00,144.28L1046.00,748.24M0.00,161.42L1046.00,765.38M0.00,178.56L1046.00,782.52M0.00,195.70L1046.00,799.66M0.00,212.84L1046.00,816.80M0.00,229.98L1046.00,833.94M0.00,247.12L1046.00,851.08M0.00,264.26L1046.00,868.22M0.00,281.40L1046.00,885.36M0.00,298.54L1046.00,902.50M0.00,315.68L1046.00,919.64M0.00,332.82L1046.00,936.78M0.00,349.96L1046.00,953.92M0.00,367.10L1046.00,971.06M0.00,384.24L1046.00,988.20M0.00,401.38L1046.00,1005.34M0.00,418.52L1046.00,1022.48M0.00,435.66L1046.00,1039.62M0.00,452.80L1046.00,1056.76M0.00,469.94L1046.00,1073.90M0.00,487.08L1046.00,1091.04M0.00,504.22L1046.00,1108.18M0.00,521.36L1046.00,1125.32M0.00,538.50L1046.00,1142.46M0.00,555.64L1046.00,1159.60M0.00,572.78L1046.00,1176.74M0.00,589.92L1046.00,1193.88M0.00,607.06L1046.00,1211.02M0.00,624.20L1046.00,1228.16M0.00,641.34L1046.00,1245.30M0.00,658.48L1046.00,1262.44M0.00,675.62L1046.00,1279.58M0.00,692.76L1046.00,1296.72M0.00,709.90L1046.00,1313.86M0.00,727.04L1046.00,1331.00M0.00,744.18L1046.00,1348.14M0.00,761.32L1046.00,1365.28M0.00,778.46L1046.00,1382.42M0.00,795.60L1046.00,1399.56M0.00,812.74L1046.00,1416.70M0.00,829.88L1046.00,1433.84M0.00,847.02L1046.00,1450.98M0.00,864.16L1046.00,1468.12M0.00,881.30L1046.00,1485.26M0.00,898.44L1046.00,1502.40M0.00,915.58L1046.00,1519.54M0.00,932.72L1046.00,1536.68M0.00,949.86L1046.00,1553.82M0.00,967.00L1046.00,1570.96M0.00,984.14L1046.00,1588.10M0.00,1001.28L1046.00,1605.24M0.00,1018.42L1046.00,1622.38M0.00,1035.56L1046.00,1639.52M0.00,1052.70L1046.00,1656.66M0.00,1069.84L1046.00,1673.80M0.00,1086.98L1046.00,1690.94M0.00,1104.12L1046.00,1708.08M0.00,1121.26L1046.00,1725.22M0.00,1138.40L1046.00,1742.36M0.00,1155.54L1046.00,1759.50M0.00,1172.68L1046.00,1776.64M0.00,1189.82L1046.00,1793.78M0.00,1206.96L1046.00,1810.92M0.00,1224.10L1046.00,1828.06M0.00,1241.24L1046.00,1845.20M0.00,1258.38L1046.00,1862.34M0.00,1275.52L1046.00,1879.48M0.00,1292.66L1046.00,1896.62M0.00,1309.80L1046.00,1913.76M0.00,1326.94L1046.00,1930.90M0.00,1344.08L1046.00,1948.04M0.00,1361.22L1046.00,1965.18M0.00,1378.36L1046.00,1982.32M0.00,1395.50L1046.00,1999.46M0.00,1412.64L1046.00,2016.60M0.00,1429.78L1046.00,2033.74M0.00,1446.92L1046.00,2050.88M0.00,1464.06L1046.00,2068.02M0.00,1481.20L1046.00,2085.16M0.00,1498.34L1046.00,2102.30M0.00,-752.94L1046.00,-1356.90M0.00,-735.80L1046.00,-1339.76M0.00,-718.66L1046.00,-1322.62M0.00,-701.52L1046.00,-1305.48M0.00,-684.38L1046.00,-1288.34M0.00,-667.24L1046.00,-1271.20M0.00,-650.10L1046.00,-1254.06M0.00,-632.96L1046.00,-1236.92M0.00,-615.82L1046.00,-1219.78M0.00,-598.68L1046.00,-1202.64M0.00,-581.54L1046.00,-1185.50M0.00,-564.40L1046.00,-1168.36M0.00,-547.26L1046.00,-1151.22M0.00,-530.12L1046.00,-1134.08M0.00,-512.98L1046.00,-1116.94M0.00,-495.84L1046.00,-1099.80M0.00,-478.70L1046.00,-1082.66M0.00,-461.56L1046.00,-1065.52M0.00,-444.42L1046.00,-1048.38M0.00,-427.28L1046.00,-1031.24M0.00,-410.14L1046.00,-1014.10M0.00,-393.00L1046.00,-996.96M0.00,-375.86L1046.00,-979.82M0.00,-358.72L1046.00,-962.68M0.00,-341.58L1046.00,-945.54M0.00,-324.44L1046.00,-928.40M0.00,-307.30L1046.00,-911.26M0.00,-290.16L1046.00,-894.12M0.00,-273.02L1046.00,-876.98M0.00,-255.88L1046.00,-859.84M0.00,-238.74L1046.00,-842.70M0.00,-221.60L1046.00,-825.56M0.00,-204.46L1046.00,-808.42M0.00,-187.32L1046.00,-791.28M0.00,-170.18L1046.00,-774.14M0.00,-153.04L1046.00,-757.00M0.00,-135.90L1046.00,-739.86M0.00,-118.76L1046.00,-722.72M0.00,-101.62L1046.00,-705.58M0.00,-84.48L1046.00,-688.44M0.00,-67.34L1046.00,-671.30M0.00,-50.20L1046.00,-654.16M0.00,-33.06L1046.00,-637.02M0.00,-15.92L1046.00,-619.88M0.00,1.22L1046.00,-602.74M0.00,18.36L1046.00,-585.60M0.00,35.50L1046.00,-568.46M0.00,52.64L1046.00,-551.32M0.00,69.78L1046.00,-534.18M0.00,86.92L1046.00,-517.04M0.00,104.06L1046.00,-499.90M0.00,121.20L1046.00,-482.76M0.00,138.34L1046.00,-465.62M0.00,155.48L1046.00,-448.48M0.00,172.62L1046.00,-431.34M0.00,189.76L1046.00,-414.20M0.00,206.90L1046.00,-397.06M0.00,224.04L1046.00,-379.92M0.00,241.18L1046.00,-362.78M0.00,258.32L1046.00,-345.64M0.00,275.46L1046.00,-328.50M0.00,292.60L1046.00,-311.36M0.00,309.74L1046.00,-294.22M0.00,326.88L1046.00,-277.08M0.00,344.02L1046.00,-259.94M0.00,361.16L1046.00,-242.80M0.00,378.30L1046.00,-225.66M0.00,395.44L1046.00,-208.52M0.00,412.58L1046.00,-191.38M0.00,429.72L1046.00,-174.24M0.00,446.86L1046.00,-157.10M0.00,464.00L1046.00,-139.96M0.00,481.14L1046.00,-122.82M0.00,498.28L1046.00,-105.68M0.00,515.42L1046.00,-88.54M0.00,532.56L1046.00,-71.40M0.00,549.70L1046.00,-54.26M0.00,566.84L1046.00,-37.12M0.00,583.98L1046.00,-19.98M0.00,601.12L1046.00,-2.84M0.00,618.26L1046.00,14.30M0.00,635.40L1046.00,31.44M0.00,652.54L1046.00,48.58M0.00,669.68L1046.00,65.72M0.00,686.82L1046.00,82.86M0.00,703.96L1046.00,100.00M0.00,721.10L1046.00,117.14M0.00,738.24L1046.00,134.28M0.00,755.38L1046.00,151.42M0.00,772.52L1046.00,168.56M0.00,789.66L1046.00,185.70M0.00,806.80L1046.00,202.84M0.00,823.94L1046.00,219.98M0.00,841.08L1046.00,237.12M0.00,858.22L1046.00,254.26M0.00,875.36L1046.00,271.40M0.00,892.50L1046.00,288.54M0.00,909.64L1046.00,305.68M0.00,926.78L1046.00,322.82M0.00,943.92L1046.00,339.96M0.00,961.06L1046.00,357.10M0.00,978.20L1046.00,374.24M0.00,995.34L1046.00,391.38M0.00,1012.48L1046.00,408.52M0.00,1029.62L1046.00,425.66M0.00,1046.76L1046.00,442.80M0.00,1063.90L1046.00,459.94M0.00,1081.04L1046.00,477.08M0.00,1098.18L1046.00,494.22M0.00,1115.32L1046.00,511.36M0.00,1132.46L1046.00,528.50M0.00,1149.60L1046.00,545.64M0.00,1166.74L1046.00,562.78M0.00,1183.88L1046.00,579.92M0.00,1201.02L1046.00,597.06M0.00,1218.16L1046.00,614.20M0.00,1235.30L1046.00,631.34M0.00,1252.44L1046.00,648.48M0.00,1269.58L1046.00,665.62M0.00,1286.72L1046.00,682.76M0.00,1303.86L1046.00,699.90M0.00,1321.00L1046.00,717.04M0.00,1338.14L1046.00,734.18M0.00,1355.28L1046.00,751.32M0.00,1372.42L1046.00,768.46M0.00,1389.56L1046.00,785.60M0.00,1406.70L1046.00,802.74M0.00,1423.84L1046.00,819.88M0.00,1440.98L1046.00,837.02M0.00,1458.12L1046.00,854.16M0.00,1475.26L1046.00,871.30M0.00,1492.40L1046.00,888.44M0.00,1509.54L1046.00,905.58M0.00,1526.68L1046.00,922.72M0.00,1543.82L1046.00,939.86M0.00,1560.96L1046.00,957.00M0.00,1578.10L1046.00,974.14M0.00,1595.24L1046.00,991.28M0.00,1612.38L1046.00,1008.42M0.00,1629.52L1046.00,1025.56M0.00,1646.66L1046.00,1042.70M0.00,1663.80L1046.00,1059.84M0.00,1680.94L1046.00,1076.98M0.00,1698.08L1046.00,1094.12M0.00,1715.22L1046.00,1111.26M0.00,1732.36L1046.00,1128.40M0.00,1749.50L1046.00,1145.54" stroke="#000" stroke-opacity="0.1" stroke-width="1" fill="none"/>
<path d="M0,247.1L1046,851.1" stroke="#ff6060" stroke-width="1" stroke-opacity="0.8" stroke-dasharray="1.2,1.2"/>
<path d="M0,498.3L1046,-105.7" stroke="#50e050" stroke-width="1" stroke-opacity="0.8" stroke-dasharray="1.2,1.2"/>
<ellipse cx="217.5" cy="372.7" rx="4.2" ry="2.6" fill="none" stroke="#b0b0b0" stroke-width="1.3"/>
<path d="M232.31,317.00 L500.25,471.70 L500.25,533.70 L232.31,379.00 Z" fill="#6b6c66"/>
<path d="M797.29,317.00 L529.35,471.70 L529.35,533.70 L797.29,379.00 Z" fill="#85837e"/>
<linearGradient id="gF" gradientUnits="userSpaceOnUse" x1="500.3" y1="0" x2="529.3" y2="0"><stop offset="0" stop-color="#6e6e69"/><stop offset="0.35" stop-color="#6a6964"/><stop offset="0.9" stop-color="#57544e"/><stop offset="0.96" stop-color="#8a8884"/><stop offset="1" stop-color="#85837e"/></linearGradient>
<path d="M529.35,471.70 L528.16,472.33 L526.89,472.91 L525.55,473.43 L524.14,473.88 L522.67,474.28 L521.16,474.60 L519.60,474.85 L518.02,475.03 L516.41,475.14 L514.80,475.18 L513.19,475.14 L511.58,475.03 L510.00,474.85 L508.44,474.60 L506.93,474.28 L505.46,473.88 L504.05,473.43 L502.71,472.91 L501.44,472.33 L500.25,471.70 L500.25,533.70 L501.44,534.33 L502.71,534.91 L504.05,535.43 L505.46,535.88 L506.93,536.28 L508.44,536.60 L510.00,536.85 L511.58,537.03 L513.19,537.14 L514.80,537.18 L516.41,537.14 L518.02,537.03 L519.60,536.85 L521.16,536.60 L522.67,536.28 L524.14,535.88 L525.55,535.43 L526.89,534.91 L528.16,534.33 L529.35,533.70 Z" fill="url(#gF)"/>
<path d="M232.31,317.00 L231.21,316.32 L230.21,315.58 L229.32,314.81 L228.53,313.99 L227.85,313.15 L227.29,312.27 L226.85,311.37 L226.54,310.46 L226.35,309.53 L226.28,308.60 L226.28,370.60 L226.35,371.53 L226.54,372.46 L226.85,373.37 L227.29,374.27 L227.85,375.15 L228.53,375.99 L229.32,376.81 L230.21,377.58 L231.21,378.32 L232.31,379.00 Z" fill="#62615b"/>
<path d="M803.32,308.60 L803.25,309.53 L803.06,310.46 L802.75,311.37 L802.31,312.27 L801.75,313.15 L801.07,313.99 L800.28,314.81 L799.39,315.58 L798.39,316.32 L797.29,317.00 L797.29,379.00 L798.39,378.32 L799.39,377.58 L800.28,376.81 L801.07,375.99 L801.75,375.15 L802.31,374.27 L802.75,373.37 L803.06,372.46 L803.25,371.53 L803.32,370.60 Z" fill="#807e79"/>
<path d="M232.3,317.0L232.3,379.0" stroke="#1a1a1a" stroke-width="1"/>
<path d="M500.3,471.7L500.3,533.7" stroke="#1a1a1a" stroke-width="1"/>
<path d="M529.3,471.7L529.3,533.7" stroke="#d6d6d6" stroke-width="0.8"/>
<path d="M797.3,317.0L797.3,379.0" stroke="#c8c8c8" stroke-width="0.7"/>
<path d="M226.28,308.60 L226.28,370.60 L226.35,371.53 L226.54,372.46 L226.85,373.37 L227.29,374.27 L227.85,375.15 L228.53,375.99 L229.32,376.81 L230.21,377.58 L231.21,378.32 L232.31,379.00 L232.31,379.00 L500.25,533.70 L501.44,534.33 L502.71,534.91 L504.05,535.43 L505.46,535.88 L506.93,536.28 L508.44,536.60 L510.00,536.85 L511.58,537.03 L513.19,537.14 L514.80,537.18 L516.41,537.14 L518.02,537.03 L519.60,536.85 L521.16,536.60 L522.67,536.28 L524.14,535.88 L525.55,535.43 L526.89,534.91 L528.16,534.33 L529.35,533.70 L797.29,379.00 L797.29,379.00 L798.39,378.32 L799.39,377.58 L800.28,376.81 L801.07,375.99 L801.75,375.15 L802.31,374.27 L802.75,373.37 L803.06,372.46 L803.25,371.53 L803.32,370.60 L803.32,308.60" stroke="#1a1a1a" stroke-width="1" fill="none"/>
<clipPath id="cl"><rect x="0" y="0" width="514.8" height="700"/></clipPath>
<clipPath id="cr"><rect x="514.8" y="0" width="600" height="700"/></clipPath>
<linearGradient id="gB1" gradientUnits="userSpaceOnUse" x1="226" y1="0" x2="803" y2="0"><stop offset="0" stop-color="#9a9a96"/><stop offset="0.47" stop-color="#9a9a96"/><stop offset="0.5" stop-color="#b4b2aa"/><stop offset="0.53" stop-color="#5e5b53"/><stop offset="1" stop-color="#5e5b53"/></linearGradient>
<path d="M500.25,145.50 L501.75,144.72 L503.37,144.02 L505.10,143.42 L506.93,142.92 L508.83,142.53 L510.79,142.25 L512.78,142.08 L514.80,142.02 L516.82,142.08 L518.81,142.25 L520.77,142.53 L522.67,142.92 L524.50,143.42 L526.23,144.02 L527.85,144.72 L529.35,145.50 L797.29,300.20 L798.65,301.06 L799.85,302.00 L800.89,303.00 L801.75,304.05 L802.43,305.15 L802.92,306.28 L803.22,307.44 L803.32,308.60 L803.22,309.76 L802.92,310.92 L802.43,312.05 L801.75,313.15 L800.89,314.20 L799.85,315.20 L798.65,316.14 L797.29,317.00 L529.35,471.70 L527.85,472.48 L526.23,473.18 L524.50,473.78 L522.67,474.28 L520.77,474.67 L518.81,474.95 L516.82,475.12 L514.80,475.18 L512.78,475.12 L510.79,474.95 L508.83,474.67 L506.93,474.28 L505.10,473.78 L503.37,473.18 L501.75,472.48 L500.25,471.70 L232.31,317.00 L230.95,316.14 L229.75,315.20 L228.71,314.20 L227.85,313.15 L227.17,312.05 L226.68,310.92 L226.38,309.76 L226.28,308.60 L226.38,307.44 L226.68,306.28 L227.17,305.15 L227.85,304.05 L228.71,303.00 L229.75,302.00 L230.95,301.06 L232.31,300.20 Z" fill="url(#gB1)"/>
<linearGradient id="gB2" gradientUnits="userSpaceOnUse" x1="226" y1="0" x2="803" y2="0"><stop offset="0" stop-color="#a49f8e"/><stop offset="0.47" stop-color="#a49f8e"/><stop offset="0.5" stop-color="#d2cfc4"/><stop offset="0.535" stop-color="#625f57"/><stop offset="1" stop-color="#625f57"/></linearGradient>
<path d="M501.03,144.05 L502.45,143.31 L503.98,142.65 L505.62,142.08 L507.35,141.61 L509.15,141.24 L511.00,140.97 L512.89,140.81 L514.80,140.76 L516.71,140.81 L518.60,140.97 L520.45,141.24 L522.25,141.61 L523.98,142.08 L525.62,142.65 L527.15,143.31 L528.57,144.05 L796.51,298.75 L797.79,299.57 L798.93,300.45 L799.91,301.40 L800.73,302.40 L801.37,303.44 L801.84,304.51 L802.12,305.60 L802.21,306.70 L802.12,307.80 L801.84,308.89 L801.37,309.96 L800.73,311.00 L799.91,312.00 L798.93,312.95 L797.79,313.83 L796.51,314.65 L528.57,469.35 L527.15,470.09 L525.62,470.75 L523.98,471.32 L522.25,471.79 L520.45,472.16 L518.60,472.43 L516.71,472.59 L514.80,472.64 L512.89,472.59 L511.00,472.43 L509.15,472.16 L507.35,471.79 L505.62,471.32 L503.98,470.75 L502.45,470.09 L501.03,469.35 L233.09,314.65 L231.81,313.83 L230.67,312.95 L229.69,312.00 L228.87,311.00 L228.23,309.96 L227.76,308.89 L227.48,307.80 L227.39,306.70 L227.48,305.60 L227.76,304.51 L228.23,303.44 L228.87,302.40 L229.69,301.40 L230.67,300.45 L231.81,299.57 L233.09,298.75 Z" fill="url(#gB2)"/>
<path d="M226.28,308.60 L226.38,307.44 L226.68,306.28 L227.17,305.15 L227.85,304.05 L228.71,303.00 L229.75,302.00 L230.95,301.06 L232.31,300.20" fill="none" stroke="#1a1a1a" stroke-width="0.9"/>
<path d="M797.29,300.20 L799.06,301.37 L800.56,302.66 L801.75,304.05 L802.61,305.53 L803.14,307.05 L803.32,308.60 L803.14,310.15 L802.61,311.67 L801.75,313.15 L800.56,314.54 L799.06,315.83 L797.29,317.00" fill="none" stroke="#1a1a1a" stroke-width="0.9"/>
<path d="M514.80,474.58 L516.82,474.52 L518.81,474.35 L520.77,474.07 L522.67,473.68 L524.50,473.18 L526.23,472.58 L527.85,471.88 L529.35,471.10 L797.29,316.40 L798.65,315.54 L799.85,314.60 L800.89,313.60 L801.75,312.55 L802.43,311.45 L802.92,310.32 L803.22,309.16 L803.32,308.00" fill="none" stroke="#e8e6e0" stroke-width="1.1"/>
<path d="M226.28,308.60 L226.38,309.76 L226.68,310.92 L227.17,312.05 L227.85,313.15 L228.71,314.20 L229.75,315.20 L230.95,316.14 L232.31,317.00 L500.25,471.70 L501.75,472.48 L503.37,473.18 L505.10,473.78 L506.93,474.28 L508.83,474.67 L510.79,474.95 L512.78,475.12 L514.80,475.18" fill="none" stroke="#151515" stroke-width="1" stroke-dasharray="3,1" shape-rendering="crispEdges"/>
<path d="M502.94,143.05 L504.16,142.41 L505.48,141.85 L506.89,141.36 L508.38,140.95 L509.93,140.63 L511.53,140.40 L513.16,140.26 L514.80,140.21 L516.44,140.26 L518.07,140.40 L519.67,140.63 L521.22,140.95 L522.71,141.36 L524.12,141.85 L525.44,142.41 L526.66,143.05 L794.60,297.75 L795.71,298.45 L796.69,299.22 L797.54,300.03 L798.24,300.89 L798.80,301.79 L799.20,302.71 L799.44,303.65 L799.52,304.60 L799.44,305.55 L799.20,306.49 L798.80,307.41 L798.24,308.31 L797.54,309.17 L796.69,309.98 L795.71,310.75 L794.60,311.45 L526.66,466.15 L525.44,466.79 L524.12,467.35 L522.71,467.84 L521.22,468.25 L519.67,468.57 L518.07,468.80 L516.44,468.94 L514.80,468.99 L513.16,468.94 L511.53,468.80 L509.93,468.57 L508.38,468.25 L506.89,467.84 L505.48,467.35 L504.16,466.79 L502.94,466.15 L235.00,311.45 L233.89,310.75 L232.91,309.98 L232.06,309.17 L231.36,308.31 L230.80,307.41 L230.40,306.49 L230.16,305.55 L230.08,304.60 L230.16,303.65 L230.40,302.71 L230.80,301.79 L231.36,300.89 L232.06,300.03 L232.91,299.22 L233.89,298.45 L235.00,297.75 Z" fill="#6c685e"/>
<path d="M502.94,143.05 L504.16,142.41 L505.48,141.85 L506.89,141.36 L508.38,140.95 L509.93,140.63 L511.53,140.40 L513.16,140.26 L514.80,140.21 L516.44,140.26 L518.07,140.40 L519.67,140.63 L521.22,140.95 L522.71,141.36 L524.12,141.85 L525.44,142.41 L526.66,143.05 L794.60,297.75 L795.71,298.45 L796.69,299.22 L797.54,300.03 L798.24,300.89 L798.80,301.79 L799.20,302.71 L799.44,303.65 L799.52,304.60 L799.44,305.55 L799.20,306.49 L798.80,307.41 L798.24,308.31 L797.54,309.17 L796.69,309.98 L795.71,310.75 L794.60,311.45 L526.66,466.15 L525.44,466.79 L524.12,467.35 L522.71,467.84 L521.22,468.25 L519.67,468.57 L518.07,468.80 L516.44,468.94 L514.80,468.99 L513.16,468.94 L511.53,468.80 L509.93,468.57 L508.38,468.25 L506.89,467.84 L505.48,467.35 L504.16,466.79 L502.94,466.15 L235.00,311.45 L233.89,310.75 L232.91,309.98 L232.06,309.17 L231.36,308.31 L230.80,307.41 L230.40,306.49 L230.16,305.55 L230.08,304.60 L230.16,303.65 L230.40,302.71 L230.80,301.79 L231.36,300.89 L232.06,300.03 L232.91,299.22 L233.89,298.45 L235.00,297.75 Z" fill="none" stroke="#101010" stroke-width="1" stroke-dasharray="3,1" shape-rendering="crispEdges"/>
<clipPath id="co"><path d="M633.62,373.20 L628.86,375.84 L623.93,378.37 L618.83,380.79 L613.57,383.09 L608.15,385.27 L602.60,387.32 L596.90,389.25 L591.08,391.04 L585.15,392.70 L579.10,394.23 L572.96,395.62 L566.72,396.87 L560.41,397.97 L554.03,398.93 L547.58,399.75 L541.09,400.42 L534.55,400.94 L527.98,401.32 L521.40,401.54 L514.80,401.62 L508.20,401.54 L501.62,401.32 L495.05,400.94 L488.51,400.42 L482.02,399.75 L475.57,398.93 L469.19,397.97 L462.88,396.87 L456.64,395.62 L450.50,394.23 L444.45,392.70 L438.52,391.04 L432.70,389.25 L427.00,387.32 L421.45,385.27 L416.03,383.09 L410.77,380.79 L405.67,378.37 L400.74,375.84 L395.98,373.20 L391.41,370.45 L387.03,367.61 L382.84,364.66 L378.86,361.62 L375.09,358.50 L371.53,355.29 L368.19,352.00 L365.08,348.64 L362.20,345.22 L359.56,341.73 L357.16,338.18 L354.99,334.58 L353.08,330.93 L351.41,327.25 L350.00,323.53 L348.84,319.78 L347.93,316.00 L347.29,312.21 L346.90,308.41 L346.77,304.60 L346.90,300.79 L347.29,296.99 L347.93,293.20 L348.84,289.42 L350.00,285.67 L351.41,281.95 L353.08,278.27 L354.99,274.62 L357.16,271.02 L359.56,267.47 L362.20,263.98 L365.08,260.56 L368.19,257.20 L371.53,253.91 L375.09,250.70 L378.86,247.58 L382.84,244.54 L387.03,241.59 L391.41,238.75 L395.98,236.00 L400.74,233.36 L405.67,230.83 L410.77,228.41 L416.03,226.11 L421.45,223.93 L427.00,221.88 L432.70,219.95 L438.52,218.16 L444.45,216.50 L450.50,214.97 L456.64,213.58 L462.88,212.33 L469.19,211.23 L475.57,210.27 L482.02,209.45 L488.51,208.78 L495.05,208.26 L501.62,207.88 L508.20,207.66 L514.80,207.58 L521.40,207.66 L527.98,207.88 L534.55,208.26 L541.09,208.78 L547.58,209.45 L554.03,210.27 L560.41,211.23 L566.72,212.33 L572.96,213.58 L579.10,214.97 L585.15,216.50 L591.08,218.16 L596.90,219.95 L602.60,221.88 L608.15,223.93 L613.57,226.11 L618.83,228.41 L623.93,230.83 L628.86,233.36 L633.62,236.00 L638.19,238.75 L642.57,241.59 L646.76,244.54 L650.74,247.58 L654.51,250.70 L658.07,253.91 L661.41,257.20 L664.52,260.56 L667.40,263.98 L670.04,267.47 L672.44,271.02 L674.61,274.62 L676.52,278.27 L678.19,281.95 L679.60,285.67 L680.76,289.42 L681.67,293.20 L682.31,296.99 L682.70,300.79 L682.83,304.60 L682.70,308.41 L682.31,312.21 L681.67,316.00 L680.76,319.78 L679.60,323.53 L678.19,327.25 L676.52,330.93 L674.61,334.58 L672.44,338.18 L670.04,341.73 L667.40,345.22 L664.52,348.64 L661.41,352.00 L658.07,355.29 L654.51,358.50 L650.74,361.62 L646.76,364.66 L642.57,367.61 L638.19,370.45 L633.62,373.20 Z"/></clipPath>
<linearGradient id="gW" gradientUnits="userSpaceOnUse" x1="346" y1="0" x2="683" y2="0"><stop offset="0" stop-color="#6a6a64"/><stop offset="0.08" stop-color="#5a5852"/><stop offset="0.2" stop-color="#524f49"/><stop offset="0.35" stop-color="#57554f"/><stop offset="0.5" stop-color="#676761"/><stop offset="0.7" stop-color="#7b7d77"/><stop offset="0.8" stop-color="#797b75"/><stop offset="0.9" stop-color="#676762"/><stop offset="1" stop-color="#5c5c57"/></linearGradient>
<path d="M633.62,373.20 L628.86,375.84 L623.93,378.37 L618.83,380.79 L613.57,383.09 L608.15,385.27 L602.60,387.32 L596.90,389.25 L591.08,391.04 L585.15,392.70 L579.10,394.23 L572.96,395.62 L566.72,396.87 L560.41,397.97 L554.03,398.93 L547.58,399.75 L541.09,400.42 L534.55,400.94 L527.98,401.32 L521.40,401.54 L514.80,401.62 L508.20,401.54 L501.62,401.32 L495.05,400.94 L488.51,400.42 L482.02,399.75 L475.57,398.93 L469.19,397.97 L462.88,396.87 L456.64,395.62 L450.50,394.23 L444.45,392.70 L438.52,391.04 L432.70,389.25 L427.00,387.32 L421.45,385.27 L416.03,383.09 L410.77,380.79 L405.67,378.37 L400.74,375.84 L395.98,373.20 L391.41,370.45 L387.03,367.61 L382.84,364.66 L378.86,361.62 L375.09,358.50 L371.53,355.29 L368.19,352.00 L365.08,348.64 L362.20,345.22 L359.56,341.73 L357.16,338.18 L354.99,334.58 L353.08,330.93 L351.41,327.25 L350.00,323.53 L348.84,319.78 L347.93,316.00 L347.29,312.21 L346.90,308.41 L346.77,304.60 L346.90,300.79 L347.29,296.99 L347.93,293.20 L348.84,289.42 L350.00,285.67 L351.41,281.95 L353.08,278.27 L354.99,274.62 L357.16,271.02 L359.56,267.47 L362.20,263.98 L365.08,260.56 L368.19,257.20 L371.53,253.91 L375.09,250.70 L378.86,247.58 L382.84,244.54 L387.03,241.59 L391.41,238.75 L395.98,236.00 L400.74,233.36 L405.67,230.83 L410.77,228.41 L416.03,226.11 L421.45,223.93 L427.00,221.88 L432.70,219.95 L438.52,218.16 L444.45,216.50 L450.50,214.97 L456.64,213.58 L462.88,212.33 L469.19,211.23 L475.57,210.27 L482.02,209.45 L488.51,208.78 L495.05,208.26 L501.62,207.88 L508.20,207.66 L514.80,207.58 L521.40,207.66 L527.98,207.88 L534.55,208.26 L541.09,208.78 L547.58,209.45 L554.03,210.27 L560.41,211.23 L566.72,212.33 L572.96,213.58 L579.10,214.97 L585.15,216.50 L591.08,218.16 L596.90,219.95 L602.60,221.88 L608.15,223.93 L613.57,226.11 L618.83,228.41 L623.93,230.83 L628.86,233.36 L633.62,236.00 L638.19,238.75 L642.57,241.59 L646.76,244.54 L650.74,247.58 L654.51,250.70 L658.07,253.91 L661.41,257.20 L664.52,260.56 L667.40,263.98 L670.04,267.47 L672.44,271.02 L674.61,274.62 L676.52,278.27 L678.19,281.95 L679.60,285.67 L680.76,289.42 L681.67,293.20 L682.31,296.99 L682.70,300.79 L682.83,304.60 L682.70,308.41 L682.31,312.21 L681.67,316.00 L680.76,319.78 L679.60,323.53 L678.19,327.25 L676.52,330.93 L674.61,334.58 L672.44,338.18 L670.04,341.73 L667.40,345.22 L664.52,348.64 L661.41,352.00 L658.07,355.29 L654.51,358.50 L650.74,361.62 L646.76,364.66 L642.57,367.61 L638.19,370.45 L633.62,373.20 Z" fill="url(#gW)"/>
<path d="M633.62,390.30 L628.86,392.94 L623.93,395.47 L618.83,397.89 L613.57,400.19 L608.15,402.37 L602.60,404.42 L596.90,406.35 L591.08,408.14 L585.15,409.80 L579.10,411.33 L572.96,412.72 L566.72,413.97 L560.41,415.07 L554.03,416.03 L547.58,416.85 L541.09,417.52 L534.55,418.04 L527.98,418.42 L521.40,418.64 L514.80,418.72 L508.20,418.64 L501.62,418.42 L495.05,418.04 L488.51,417.52 L482.02,416.85 L475.57,416.03 L469.19,415.07 L462.88,413.97 L456.64,412.72 L450.50,411.33 L444.45,409.80 L438.52,408.14 L432.70,406.35 L427.00,404.42 L421.45,402.37 L416.03,400.19 L410.77,397.89 L405.67,395.47 L400.74,392.94 L395.98,390.30 L391.41,387.55 L387.03,384.71 L382.84,381.76 L378.86,378.72 L375.09,375.60 L371.53,372.39 L368.19,369.10 L365.08,365.74 L362.20,362.32 L359.56,358.83 L357.16,355.28 L354.99,351.68 L353.08,348.03 L351.41,344.35 L350.00,340.63 L348.84,336.88 L347.93,333.10 L347.29,329.31 L346.90,325.51 L346.77,321.70 L346.90,317.89 L347.29,314.09 L347.93,310.30 L348.84,306.52 L350.00,302.77 L351.41,299.05 L353.08,295.37 L354.99,291.72 L357.16,288.12 L359.56,284.57 L362.20,281.08 L365.08,277.66 L368.19,274.30 L371.53,271.01 L375.09,267.80 L378.86,264.68 L382.84,261.64 L387.03,258.69 L391.41,255.85 L395.98,253.10 L400.74,250.46 L405.67,247.93 L410.77,245.51 L416.03,243.21 L421.45,241.03 L427.00,238.98 L432.70,237.05 L438.52,235.26 L444.45,233.60 L450.50,232.07 L456.64,230.68 L462.88,229.43 L469.19,228.33 L475.57,227.37 L482.02,226.55 L488.51,225.88 L495.05,225.36 L501.62,224.98 L508.20,224.76 L514.80,224.68 L521.40,224.76 L527.98,224.98 L534.55,225.36 L541.09,225.88 L547.58,226.55 L554.03,227.37 L560.41,228.33 L566.72,229.43 L572.96,230.68 L579.10,232.07 L585.15,233.60 L591.08,235.26 L596.90,237.05 L602.60,238.98 L608.15,241.03 L613.57,243.21 L618.83,245.51 L623.93,247.93 L628.86,250.46 L633.62,253.10 L638.19,255.85 L642.57,258.69 L646.76,261.64 L650.74,264.68 L654.51,267.80 L658.07,271.01 L661.41,274.30 L664.52,277.66 L667.40,281.08 L670.04,284.57 L672.44,288.12 L674.61,291.72 L676.52,295.37 L678.19,299.05 L679.60,302.77 L680.76,306.52 L681.67,310.30 L682.31,314.09 L682.70,317.89 L682.83,321.70 L682.70,325.51 L682.31,329.31 L681.67,333.10 L680.76,336.88 L679.60,340.63 L678.19,344.35 L676.52,348.03 L674.61,351.68 L672.44,355.28 L670.04,358.83 L667.40,362.32 L664.52,365.74 L661.41,369.10 L658.07,372.39 L654.51,375.60 L650.74,378.72 L646.76,381.76 L642.57,384.71 L638.19,387.55 L633.62,390.30 Z" fill="#6a665c" clip-path="url(#co)"/>
<path d="M633.62,373.20 L628.86,375.84 L623.93,378.37 L618.83,380.79 L613.57,383.09 L608.15,385.27 L602.60,387.32 L596.90,389.25 L591.08,391.04 L585.15,392.70 L579.10,394.23 L572.96,395.62 L566.72,396.87 L560.41,397.97 L554.03,398.93 L547.58,399.75 L541.09,400.42 L534.55,400.94 L527.98,401.32 L521.40,401.54 L514.80,401.62 L508.20,401.54 L501.62,401.32 L495.05,400.94 L488.51,400.42 L482.02,399.75 L475.57,398.93 L469.19,397.97 L462.88,396.87 L456.64,395.62 L450.50,394.23 L444.45,392.70 L438.52,391.04 L432.70,389.25 L427.00,387.32 L421.45,385.27 L416.03,383.09 L410.77,380.79 L405.67,378.37 L400.74,375.84 L395.98,373.20 L391.41,370.45 L387.03,367.61 L382.84,364.66 L378.86,361.62 L375.09,358.50 L371.53,355.29 L368.19,352.00 L365.08,348.64 L362.20,345.22 L359.56,341.73 L357.16,338.18 L354.99,334.58 L353.08,330.93 L351.41,327.25 L350.00,323.53 L348.84,319.78 L347.93,316.00 L347.29,312.21 L346.90,308.41 L346.77,304.60 L346.90,300.79 L347.29,296.99 L347.93,293.20 L348.84,289.42 L350.00,285.67 L351.41,281.95 L353.08,278.27 L354.99,274.62 L357.16,271.02 L359.56,267.47 L362.20,263.98 L365.08,260.56 L368.19,257.20 L371.53,253.91 L375.09,250.70 L378.86,247.58 L382.84,244.54 L387.03,241.59 L391.41,238.75 L395.98,236.00 L400.74,233.36 L405.67,230.83 L410.77,228.41 L416.03,226.11 L421.45,223.93 L427.00,221.88 L432.70,219.95 L438.52,218.16 L444.45,216.50 L450.50,214.97 L456.64,213.58 L462.88,212.33 L469.19,211.23 L475.57,210.27 L482.02,209.45 L488.51,208.78 L495.05,208.26 L501.62,207.88 L508.20,207.66 L514.80,207.58 L521.40,207.66 L527.98,207.88 L534.55,208.26 L541.09,208.78 L547.58,209.45 L554.03,210.27 L560.41,211.23 L566.72,212.33 L572.96,213.58 L579.10,214.97 L585.15,216.50 L591.08,218.16 L596.90,219.95 L602.60,221.88 L608.15,223.93 L613.57,226.11 L618.83,228.41 L623.93,230.83 L628.86,233.36 L633.62,236.00 L638.19,238.75 L642.57,241.59 L646.76,244.54 L650.74,247.58 L654.51,250.70 L658.07,253.91 L661.41,257.20 L664.52,260.56 L667.40,263.98 L670.04,267.47 L672.44,271.02 L674.61,274.62 L676.52,278.27 L678.19,281.95 L679.60,285.67 L680.76,289.42 L681.67,293.20 L682.31,296.99 L682.70,300.79 L682.83,304.60 L682.70,308.41 L682.31,312.21 L681.67,316.00 L680.76,319.78 L679.60,323.53 L678.19,327.25 L676.52,330.93 L674.61,334.58 L672.44,338.18 L670.04,341.73 L667.40,345.22 L664.52,348.64 L661.41,352.00 L658.07,355.29 L654.51,358.50 L650.74,361.62 L646.76,364.66 L642.57,367.61 L638.19,370.45 L633.62,373.20 Z" fill="none" stroke="#101010" stroke-width="1" stroke-dasharray="3,1" shape-rendering="crispEdges"/>
<path d="M346.77,321.70 L346.85,318.65 L347.10,315.61 L347.52,312.57 L348.09,309.54 L348.84,306.52 L349.75,303.52 L350.82,300.54 L352.05,297.57 L353.44,294.63 L354.99,291.72 L356.70,288.84 L358.57,285.99 L360.59,283.17 L362.76,280.39 L365.08,277.66 L367.55,274.96 L370.17,272.32 L372.93,269.72 L375.83,267.17 L378.86,264.68 L382.03,262.24 L385.33,259.86 L388.76,257.54 L392.31,255.29 L395.98,253.10 L399.78,250.98 L403.68,248.93 L407.69,246.95 L411.81,245.04 L416.03,243.21 L420.35,241.46 L424.76,239.79 L429.27,238.20 L433.85,236.69 L438.52,235.26 L443.26,233.92 L448.07,232.66 L452.94,231.50 L457.88,230.42 L462.88,229.43 L467.92,228.54 L473.01,227.73 L478.15,227.02 L483.31,226.40 L488.51,225.88 L493.74,225.45 L498.99,225.12 L504.25,224.88 L509.52,224.73 L514.80,224.68 L520.08,224.73 L525.35,224.88 L530.61,225.12 L535.86,225.45 L541.09,225.88 L546.29,226.40 L551.45,227.02 L556.59,227.73 L561.68,228.54 L566.72,229.43 L571.72,230.42 L576.66,231.50 L581.53,232.66 L586.34,233.92 L591.08,235.26 L595.75,236.69 L600.33,238.20 L604.84,239.79 L609.25,241.46 L613.57,243.21 L617.79,245.04 L621.91,246.95 L625.92,248.93 L629.82,250.98 L633.62,253.10 L637.29,255.29 L640.84,257.54 L644.27,259.86 L647.57,262.24 L650.74,264.68 L653.77,267.17 L656.67,269.72 L659.43,272.32 L662.05,274.96 L664.52,277.66 L666.84,280.39 L669.01,283.17 L671.03,285.99 L672.90,288.84 L674.61,291.72 L676.16,294.63 L677.55,297.57 L678.78,300.54 L679.85,303.52 L680.76,306.52 L681.51,309.54 L682.08,312.57 L682.50,315.61 L682.75,318.65 L682.83,321.70" fill="none" stroke="#101010" stroke-width="1" stroke-dasharray="3,1" shape-rendering="crispEdges" clip-path="url(#co)"/>
<ellipse cx="1034" cy="112" rx="16" ry="6" fill="#000" fill-opacity="0.05"/>
<path d="M1014.5,81.5L1031.0,74.5L1049.0,81.5L1031.6,92.5Z" fill="#eeeeee" fill-opacity="0.92" stroke="#bdbdbd" stroke-width="0.7"/>
<path d="M1014.5,81.5L1031.6,92.5L1031.6,113.0L1015.0,102.6Z" fill="#e6e6e6" fill-opacity="0.92" stroke="#bdbdbd" stroke-width="0.7"/>
<path d="M1031.6,92.5L1049.0,81.5L1049.0,102.6L1031.6,113.0Z" fill="#dcdcdc" fill-opacity="0.92" stroke="#bdbdbd" stroke-width="0.7"/>
<path d="M1031.6,92.5V113" stroke="#8c8c8c" stroke-width="0.6"/>
<text x="1017.5" y="101" font-size="6.5" fill="#8a8a8a" font-family="Liberation Sans">前</text>
<text x="1036" y="100" font-size="6.5" fill="#8a8a8a" font-family="Liberation Sans">右</text>
<text x="1027" y="85" font-size="5.5" fill="#8a8a8a" font-family="Liberation Sans">上</text>
<path d="M1014.5,79L1015,102.6" stroke="#5a5aff" stroke-width="1"/>
<path d="M1015,102.6L1035,115.5" stroke="#ff7070" stroke-width="1"/>
<text x="1010" y="78" font-size="7" fill="#6a6aff" font-family="Liberation Sans">Z</text>
<text x="1034.5" y="121" font-size="7" fill="#ff8a8a" font-family="Liberation Sans">X</text>
</svg>
<svg width="1046" height="60" style="position:absolute;left:0;top:0" font-family="Liberation Sans, sans-serif">
<!-- title bar -->
<rect x="0" y="0" width="1046" height="1.2" fill="#000"/>
<rect x="0" y="1.2" width="1046" height="15.6" fill="#cfcfcf"/>
<rect x="0" y="1.2" width="1046" height="1.6" fill="#d6d6d6"/>
<rect x="98" y="2.6" width="20" height="14.2" rx="1" fill="#bebebe"/>
<rect x="120" y="2.8" width="409" height="14" rx="1" fill="#bfbfbf"/>
<rect x="531" y="3" width="409" height="14" rx="1" fill="#f2f2f2"/>
<rect x="941" y="3" width="16" height="13.8" rx="1" fill="#bdbdbd"/>
<!-- grid icon -->
<g fill="#555">
<rect x="4" y="6" width="2" height="2"/><rect x="7" y="6" width="2" height="2"/><rect x="10" y="6" width="1.5" height="2"/>
<rect x="4" y="9" width="2" height="2"/><rect x="7" y="9" width="2" height="2"/><rect x="10" y="9" width="1.5" height="2"/>
</g>
<!-- file icon -->
<path d="M20.5,5.5h4.5l2,2v5.5h-6.5z" fill="#595959"/>
<path d="M30,8.2h3l-1.5,1.6z" fill="#555"/>
<!-- save -->
<rect x="43.5" y="5.8" width="7" height="6.8" fill="#555"/><rect x="45" y="6.3" width="4" height="2.3" fill="#cfcfcf"/><rect x="45.3" y="9.8" width="3.4" height="2.5" fill="#cfcfcf"/>
<!-- undo -->
<path d="M63.8,12.2c0.3,-3 -1.5,-4.3 -4.3,-4.1" stroke="#555" stroke-width="1.2" fill="none"/><path d="M59.6,6.2l-2.3,2l2.3,2z" fill="#555"/>
<path d="M71,8h2.6l-1.3,1.4z" fill="#555"/>
<path d="M81,12.2c-0.3,-3 1.5,-4.3 4.3,-4.1" stroke="#8a8a8a" stroke-width="1.2" fill="none"/><path d="M85.2,6.2l2.3,2l-2.3,2z" fill="#8a8a8a"/>
<path d="M91,8h2.6l-1.3,1.4z" fill="#8a8a8a"/>
<!-- home -->
<path d="M104.5,9.3l3.3,-2.6l3.3,2.6v3.7h-6.6z" fill="#707070"/>
<!-- tab1 -->
<path d="M310.2,8l4,-2l4,2v4.6l-4,2l-4,-2z" fill="#f5801c"/><path d="M310.2,8l4,-2l4,2l-4,2z" fill="#ffb070"/><path d="M314.2,10v4.6l4,-2v-4.6z" fill="#e86a10"/>
<text x="321" y="12.6" font-size="6.8" fill="#606060" textLength="12.5" lengthAdjust="spacingAndGlyphs">無題</text>
<path d="M521.5,7.6l3.6,3.6M525.1,7.6l-3.6,3.6" stroke="#777" stroke-width="0.8"/>
<!-- tab2 -->
<path d="M716.2,8l4,-2l4,2v4.6l-4,2l-4,-2z" fill="#f5801c"/><path d="M716.2,8l4,-2l4,2l-4,2z" fill="#ffb070"/><path d="M720.2,10v4.6l4,-2v-4.6z" fill="#e86a10"/>
<text x="727" y="12.6" font-size="6.8" fill="#444" textLength="23" lengthAdjust="spacingAndGlyphs">無題*(1)</text>
<path d="M933.3,7.6l3.6,3.6M936.9,7.6l-3.6,3.6" stroke="#666" stroke-width="0.8"/>
<path d="M949,5.8v6.6M945.7,9.1h6.6" stroke="#777" stroke-width="1.3"/>
<!-- right icons -->
<circle cx="967" cy="9" r="3.6" fill="none" stroke="#555" stroke-width="1.3"/><path d="M967,5.5v3.5h3.5" fill="#555"/>
<circle cx="984" cy="9" r="3.6" fill="#777"/><path d="M981,9h6M984,5.6v6.8" stroke="#cfcfcf" stroke-width="0.6"/>
<text x="990.5" y="12" font-size="6" fill="#444">L</text>
<path d="M1008.5,11.8h6l-1,-1.4v-2.6c0,-1.8 -1,-2.6 -2,-2.6s-2,0.8 -2,2.6v2.6z" fill="#555"/><rect x="1010.5" y="12.3" width="2" height="1" fill="#555"/>
<circle cx="1013.5" cy="6" r="1.5" fill="#1a9ae0"/>
<circle cx="1028" cy="9" r="3.8" fill="#606060"/><text x="1026" y="11.4" font-size="6" font-weight="bold" fill="#cfcfcf">?</text>
<path d="M1043,5.5h3v7h-3z" fill="#777"/>

<!-- toolbar -->
<rect x="0" y="16.8" width="1046" height="41.4" fill="#f2f2f2"/>
<rect x="0" y="58.2" width="1046" height="1" fill="#dadada"/>
<rect x="5.5" y="22.5" width="55" height="31" rx="2" fill="#f2f2f2" stroke="#d8d8d8" stroke-width="0.8"/>
<text x="19.5" y="39.6" font-size="6.6" font-weight="bold" fill="#333" textLength="21.5" lengthAdjust="spacingAndGlyphs">デザイン</text>
<path d="M45.5,37.4h2.6l-1.3,1.4z" fill="#333"/>
<g font-size="6.4" fill="#3a3a3a">
<text x="76" y="25.2" fill="#2a9ad8" textLength="22" lengthAdjust="spacingAndGlyphs">ソリッド</text>
<text x="121" y="25.2" textLength="27" lengthAdjust="spacingAndGlyphs">サーフェス</text>
<text x="171" y="25.2" textLength="22" lengthAdjust="spacingAndGlyphs">メッシュ</text>
<text x="216" y="25.2" textLength="35" lengthAdjust="spacingAndGlyphs">シート メタル</text>
<text x="274" y="25.2" textLength="33" lengthAdjust="spacingAndGlyphs">プラスチック</text>
<text x="330" y="25.2" textLength="37" lengthAdjust="spacingAndGlyphs">ユーティリティ</text>
<text x="390" y="25.2" textLength="11" lengthAdjust="spacingAndGlyphs">管理</text>
</g>
<rect x="70" y="27" width="34" height="1.6" fill="#1c93dc"/>
<!-- separators -->
<g fill="#dcdcdc">
<rect x="244.3" y="30" width="0.8" height="26"/><rect x="280.6" y="30" width="0.8" height="26"/>
<rect x="440" y="30" width="0.8" height="26"/><rect x="511.2" y="30" width="0.8" height="26"/>
<rect x="591.5" y="30" width="0.8" height="26"/><rect x="620" y="30" width="0.8" height="26"/>
<rect x="651.3" y="30" width="0.8" height="26"/><rect x="722.3" y="30" width="0.8" height="26"/>
</g>
<!-- group labels -->
<g font-size="5.8" fill="#333">
<text x="146" y="55.6" textLength="12" lengthAdjust="spacingAndGlyphs">作成</text>
<text x="252" y="55.6" textLength="17" lengthAdjust="spacingAndGlyphs">自動化</text>
<text x="351" y="55.6" textLength="12" lengthAdjust="spacingAndGlyphs">修正</text>
<text x="459" y="55.6" textLength="28" lengthAdjust="spacingAndGlyphs">アセンブリ</text>
<text x="520" y="55.6" textLength="60" lengthAdjust="spacingAndGlyphs">コンフィギュレーション</text>
<text x="598" y="55.6" textLength="12" lengthAdjust="spacingAndGlyphs">構築</text>
<text x="627" y="55.6" textLength="12" lengthAdjust="spacingAndGlyphs">検査</text>
<text x="677" y="55.6" textLength="12" lengthAdjust="spacingAndGlyphs">挿入</text>
<text x="729" y="55.6" textLength="12" lengthAdjust="spacingAndGlyphs">選択</text>
</g>
<g fill="#333">
<path d="M159.2,52.6h2.6l-1.3,1.5z"/><path d="M270,52.6h2.6l-1.3,1.5z"/><path d="M364.5,52.6h2.6l-1.3,1.5z"/>
<path d="M488,52.6h2.6l-1.3,1.5z"/><path d="M581.5,52.6h2.6l-1.3,1.5z"/><path d="M611.5,52.6h2.6l-1.3,1.5z"/>
<path d="M641,52.6h2.6l-1.3,1.5z"/><path d="M691.5,52.6h2.6l-1.3,1.5z"/><path d="M742.5,52.6h2.6l-1.3,1.5z"/>
</g>
<!-- 1 sketch -->
<g>
<path d="M69.5,32h15M69.5,46h8M69.5,32v14M84.5,32v8" stroke="#666" stroke-width="0.9" fill="none"/>
<path d="M72.5,35v7.5h3.5M72.5,35h8.5" stroke="#777" stroke-width="0.7" stroke-dasharray="1.2,0.9" fill="none"/>
<path d="M74.5,41l6,-5.5" stroke="#555" stroke-width="0.8"/>
<path d="M82,38.8v8.4M77.8,43h8.4" stroke="#1aa33a" stroke-width="2.2"/>
</g>
<!-- 2 extrude -->
<g>
<path d="M92,33.5l2,-2h10.5l-2,2z" fill="#86c5f2"/>
<rect x="92" y="33.5" width="10.5" height="11.5" fill="#5aaae8"/>
<path d="M102.5,33.5l2,-2v12l-2,2z" fill="#3c8ed0"/>
<path d="M92,45h10.5l2,-1.5v1.5l-2,2h-10.5z" fill="#b8b8b8"/>
<path d="M106.5,32.5v13.5" stroke="#222" stroke-width="0.7"/><path d="M105.5,33.5l1,-1.5l1,1.5z" fill="#222"/>
</g>
<!-- 3 revolve -->
<g>
<path d="M113.5,38.5Q121.5,30 130.5,38" stroke="#333" stroke-width="0.7" fill="none"/>
<path d="M112.8,40.5Q121.5,33 129.5,39.5L129.5,41.5Q121.5,36.5 113.5,43.5Z" fill="#86c5f2"/>
<path d="M113.5,43.5Q121.5,36.5 129.5,41.5L129.5,45.5Q121.5,40.5 116.5,46.5L113.5,45Z" fill="#4fa3e6"/>
<path d="M128.5,39.8L131,41v5l-2.5,0.8z" fill="#f4f4f4" stroke="#444" stroke-width="0.6"/>
</g>
<!-- 4 hole -->
<g>
<path d="M135.5,33l2,-2h14.5l-2,2z" fill="#eaeaea" stroke="#777" stroke-width="0.5"/>
<rect x="135.5" y="33" width="14.5" height="14" fill="#dcdcdc" stroke="#666" stroke-width="0.7"/>
<path d="M150,33l2,-2v14l-2,2z" fill="#b9b9b9"/>
<circle cx="142.8" cy="40" r="3.8" fill="#5aaae8" stroke="#777" stroke-width="0.6" stroke-dasharray="1,0.6"/>
<path d="M142.8,40l2.7,-2.7a3.8,3.8 0 0 1 0.6,4.2z" fill="#dcdcdc"/>
</g>
<!-- 5 pattern -->
<g>
<path d="M158.5,33.5h12M158.5,44h12M158.5,33.5v10.5" stroke="#555" stroke-width="0.7" fill="none"/>
<rect x="157" y="32" width="3" height="3" fill="#fff" stroke="#555" stroke-width="0.6"/>
<rect x="169" y="32" width="3.4" height="3" fill="#4aa3e6"/>
<rect x="157" y="42.5" width="3.4" height="3" fill="#4aa3e6"/>
<rect x="169" y="42.5" width="3.4" height="3" fill="#4aa3e6"/>
</g>
<!-- 6 form -->
<g>
<path d="M181,35l3,-2.5h5l4,3l1,4.5l-1.5,5l-3.5,2h-5l-3.5,-2.5l-0.5,-5z" fill="#9a6ed8"/>
<path d="M181.5,40h12M187,33v14" stroke="#7a4cc0" stroke-width="0.6"/>
<path d="M181,35l3,-2.5h5l-2,3z" fill="#b996ea"/>
<circle cx="192.5" cy="34" r="2.6" fill="#f59a0a"/>
<path d="M192.5,30.3v7.4M188.8,34h7.4M190,31.5l5,5M195,31.5l-5,5" stroke="#f59a0a" stroke-width="0.7"/>
</g>
<!-- 7 cube -->
<g>
<path d="M201,34.5l3.5,-3.5h13l-3.5,3.5z" fill="#84c3f1"/>
<rect x="201" y="34.5" width="13" height="12.5" fill="#5aaae8"/>
<path d="M214,34.5l3.5,-3.5v12.5l-3.5,3.5z" fill="#3d8fd0"/>
</g>
<!-- 8 mirror -->
<g>
<path d="M223.5,46.5l7,-14v14z" fill="#fff" stroke="#555" stroke-width="0.7"/>
<path d="M232,32.5v14h7z" fill="#55a6e6"/>
</g>
<!-- 9 automate -->
<g stroke="#3f9be0" stroke-width="1.1" fill="none">
<path d="M256,33l4,5.5h6l2,-2.5M260,38.5l2.5,6M266,38.5l-3.5,6"/>
<path d="M254.5,32v2.5h2.5M257,31v3" stroke-width="0.8"/>
<circle cx="268.3" cy="34.2" r="1.8" stroke="#3f9be0" fill="#fff"/>
<circle cx="262.6" cy="45.2" r="2" stroke="#3f9be0" fill="#fff"/>
</g>
<!-- 10 press pull -->
<g>
<path d="M287.5,33l1.5,-1.5h4.5v15.5h-6z" fill="#dedede" stroke="#777" stroke-width="0.5"/>
<path d="M290,33.5l2,-2h4l-2,2z" fill="#7fc0f0"/>
<rect x="290" y="33.5" width="4" height="13.5" fill="#55a6e6"/>
<path d="M294,33.5l2,-2v13.5l-2,2z" fill="#3c8ed0"/>
<path d="M295.5,38.7h5.5" stroke="#222" stroke-width="0.7"/><path d="M300.2,37.6l1.8,1.1l-1.8,1.1z" fill="#222"/>
</g>
<!-- 11 fillet -->
<g>
<path d="M308.5,33l1.5,-1.5h6l-1.5,1.5z" fill="#eaeaea" stroke="#777" stroke-width="0.4"/>
<path d="M308.5,33h7.5c3.5,0 7.5,3 8,8v6h-15.5z" fill="#dcdcdc" stroke="#666" stroke-width="0.6"/>
<path d="M315.8,31.3c4,0 8.5,3.3 9,8.5l-1.8,1.7c-0.3,-4.5 -3.5,-7.7 -7.2,-7.8z" fill="#4aa3e6"/>
<path d="M324,41l1,-1.2v5.5l-1,1.7z" fill="#b8b8b8"/>
</g>
<!-- 12 shell -->
<g>
<path d="M330.5,33l1.8,-1.8h15l-1.8,1.8z" fill="#ececec" stroke="#777" stroke-width="0.4"/>
<rect x="330.5" y="33" width="15" height="14" fill="#dcdcdc" stroke="#666" stroke-width="0.6"/>
<path d="M345.5,33l1.8,-1.8v14l-1.8,1.8z" fill="#b8b8b8"/>
<path d="M332.5,37h3.5v6h7.5v2.5h-11z" fill="#3c8ed0"/>
<path d="M336,41h7.5v2h-7.5z" fill="#7fc0f0"/>
</g>
<!-- 13 combine -->
<g>
<path d="M358,33.5l2.5,-2.5h8.5l-2.5,2.5z" fill="#7fc0f0"/>
<rect x="358" y="33.5" width="8.5" height="8" fill="#55a6e6"/>
<path d="M366.5,33.5l2.5,-2.5v8l-2.5,2.5z" fill="#3c8ed0"/>
<path d="M351.5,38l2,-1.5h5l-1,1.5z" fill="#7fc0f0"/>
<rect x="351.5" y="38" width="9" height="9" fill="#55a6e6"/>
<path d="M360.5,41.5l2,-2v6l-2,2z" fill="#3c8ed0"/>
</g>
<!-- 14 split -->
<g>
<path d="M375,33l2,-2h13l-2,2z" fill="#7fc0f0"/>
<rect x="375" y="33" width="13" height="6.5" fill="#55a6e6"/>
<path d="M388,33l2,-2v6.5l-2,2z" fill="#3c8ed0"/>
<path d="M374,40.5l15,0l2.5,-2.5" stroke="#4aa3e6" stroke-width="1" fill="none"/>
<rect x="375" y="41.5" width="13" height="5.5" fill="#dedede" stroke="#666" stroke-width="0.6"/>
<path d="M388,41.5l2,-2v5.5l-2,2z" fill="#bbb"/>
</g>
<!-- 15 move -->
<g>
<path d="M404.6,31.5v15M397.5,39h14.5" stroke="#222" stroke-width="0.9"/>
<path d="M402.6,33.5l2,-2.5l2,2.5z M402.6,44.5l2,2.5l2,-2.5z M399.5,37l-2.5,2l2.5,2z M409.7,37l2.5,2l-2.5,2z" fill="#222"/>
</g>
<!-- 16 align -->
<g>
<path d="M419.5,31.5v16" stroke="#777" stroke-width="0.8"/>
<path d="M420,33h6.5v4" stroke="#888" stroke-width="0.6" fill="#f4f4f4"/>
<rect x="420" y="39" width="14" height="4.5" fill="#4aa3e6"/>
</g>
<!-- 17 new component -->
<g>
<path d="M446,34.5l1.5,-1.5h7l-1.5,1.5z" fill="#7fc0f0"/>
<rect x="446" y="34.5" width="7" height="6.5" fill="#4aa3e6"/>
<rect x="446" y="41" width="7" height="6" fill="#dcdcdc" stroke="#555" stroke-width="0.6"/>
<rect x="453" y="41" width="7" height="6" fill="#dcdcdc" stroke="#555" stroke-width="0.6"/>
<path d="M460,41l1.5,-1.5v6l-1.5,1.5z" fill="#bbb"/>
<circle cx="458" cy="35" r="2.5" fill="#f59a0a"/>
<path d="M458,31.3v7.4M454.3,35h7.4M455.4,32.4l5.2,5.2M460.6,32.4l-5.2,5.2" stroke="#f59a0a" stroke-width="0.6"/>
</g>
<!-- 18 joint -->
<g>
<path d="M469,35l3,-3v13l-1.5,1.5l-1.5,-1.5z" fill="#d8d8d8" stroke="#555" stroke-width="0.6"/>
<path d="M478,33.5l4,2.5l2,3.5v6.5l-1.5,-1l-4.5,-3z" fill="#d8d8d8" stroke="#555" stroke-width="0.6"/>
<path d="M478.3,35.5l-1.2,3" stroke="#3c8ed0" stroke-width="1.2"/>
</g>
<!-- 19 table -->
<g>
<rect x="490" y="31" width="3" height="3" fill="#4aa3e6"/>
<rect x="490" y="34" width="3" height="3" fill="#fff" stroke="#555" stroke-width="0.5"/>
<rect x="494" y="35.5" width="3" height="3" fill="#fff" stroke="#555" stroke-width="0.5"/>
<rect x="498.5" y="35.5" width="8.5" height="11.5" fill="#fff" stroke="#555" stroke-width="0.6"/>
<rect x="498.5" y="35.5" width="8.5" height="1.5" fill="#444"/>
<path d="M498.5,39.5h8.5M498.5,42h8.5M498.5,44.5h8.5M501.5,37v10M494,40.5h3M494,42.5h3M494,44.5h3" stroke="#777" stroke-width="0.5"/>
</g>
<!-- 20 config -->
<g>
<path d="M532,34l2.5,-3h10.5v14h-13z" fill="#dcdcdc" stroke="#666" stroke-width="0.6"/>
<path d="M543,34l2,-3v14l-2,2z" fill="#bbb"/>
<path d="M541,42.3h7M541,45h7" stroke="#333" stroke-width="0.8"/>
<rect x="542.9" y="41" width="1" height="2.6" fill="#1a8ee0"/><rect x="546" y="44" width="1" height="2.2" fill="#333"/>
</g>
<!-- 21 config table -->
<g>
<rect x="554.5" y="31.5" width="15" height="14" fill="#fff" stroke="#555" stroke-width="0.7"/>
<rect x="554.5" y="31.5" width="15" height="2" fill="#555"/>
<path d="M554.5,36.5h15M554.5,39.5h15M554.5,42.5h15M558.5,33.5v12M563.5,33.5v12" stroke="#777" stroke-width="0.5"/>
<path d="M564,42.3h7M564,45h7" stroke="#333" stroke-width="0.8"/>
<rect x="565.6" y="41" width="1" height="2.6" fill="#1a8ee0"/><rect x="568.6" y="44" width="1" height="2.2" fill="#333"/>
</g>
<!-- 22 construct -->
<g>
<path d="M597.5,35l4,-3.5v13.5l-4,2.5z" fill="#eeeeee" stroke="#666" stroke-width="0.6"/>
<path d="M602,35l4.5,-4v13l-4.5,3.5z" fill="#46c06a"/>
<path d="M609.5,35l4.5,-4v12.5l-4.5,4z" fill="#ec9455"/>
</g>
<!-- 23 inspect -->
<g>
<path d="M629.5,35.5v3.2M643.5,35.5v3.2M629.5,37.1h14" stroke="#444" stroke-width="0.6"/>
<rect x="629" y="39.5" width="15" height="3.2" fill="#f5a20f"/>
<path d="M631,39.5v1.2M634,39.5v1.2M637,39.5v1.2M640,39.5v1.2" stroke="#555" stroke-width="0.6"/>
</g>
<!-- 24 derive -->
<g>
<path d="M659,36l2.5,-2.5h9.5l-2.5,2.5z" fill="#eee" stroke="#777" stroke-width="0.4"/>
<rect x="659" y="36" width="9.5" height="10.5" fill="#dcdcdc" stroke="#666" stroke-width="0.6"/>
<path d="M668.5,36l2.5,-2.5v10l-2.5,2.5z" fill="#bbb"/>
<path d="M657,33.2h6" stroke="#1a8ee0" stroke-width="1.3"/><path d="M662.5,31l2.6,2.2l-2.6,2.2z" fill="#1a8ee0"/>
<path d="M665.5,45.5l5,-4.5" stroke="#333" stroke-width="2.6"/><path d="M665.5,45.5l5,-4.5" stroke="#dcdcdc" stroke-width="1.2"/>
</g>
<!-- 25 bolt -->
<g>
<path d="M680.5,32.5h14l-1,2.5h-12z" fill="#6bb4ec"/>
<rect x="684.5" y="35" width="6" height="12" fill="#4aa3e6"/>
<path d="M687.5,35v12" stroke="#3c8ed0" stroke-width="1.3"/>
<path d="M692.5,40.5v7.5M688.8,44.2h7.5" stroke="#1aa33a" stroke-width="2"/>
</g>
<!-- 26 image -->
<g>
<rect x="702" y="31" width="15" height="14" fill="#6bb4ec"/>
<path d="M702,41l4,-4l3.5,3l3,-2.5l4.5,4v3.5h-15z" fill="#3d8fd0"/>
<circle cx="712.5" cy="35" r="1.6" fill="#f7ee9a"/>
</g>
<!-- 27 select -->
<g>
<rect x="728" y="29" width="20" height="19.7" fill="#1795dc"/>
<path d="M731,31.5v9.5h8" stroke="#7ee07a" stroke-width="0.8" stroke-dasharray="1,1" fill="none"/>
<path d="M741,38l0,8l2,-1.8l1.5,3l1.2,-0.6l-1.5,-3l2.6,-0.2z" fill="#fff"/>
</g>

</svg>

<svg width="1046" height="638" style="position:absolute;left:0;top:0" font-family="Liberation Sans, sans-serif">
<!-- browser header -->
<rect x="1.5" y="62.5" width="152.5" height="13" fill="#f0f0f0" stroke="#d6d6d6" stroke-width="0.8"/>
<path d="M4.5,69.2l2,-1.4v2.8zM7,69.2l2,-1.4v2.8z" fill="#444"/>
<text x="14" y="71.6" font-size="6" fill="#666" textLength="22" lengthAdjust="spacingAndGlyphs">ブラウザ</text>
<circle cx="146.4" cy="69" r="2" fill="#333"/>
<!-- row1 -->
<rect x="19" y="79" width="69" height="9" fill="#ececec" fill-opacity="0.9"/>
<path d="M9.5,86.8l5,-5.5v5.5z" fill="#555"/>
<ellipse cx="25" cy="83" rx="3.6" ry="2" fill="none" stroke="#9a9a9a" stroke-width="1"/><circle cx="25" cy="83" r="1.1" fill="#9a9a9a"/>
<rect x="32" y="79.3" width="44" height="7.6" fill="#8c8c8c"/>
<rect x="33.5" y="79.8" width="7" height="6.6" fill="#e6e6e6" stroke="#aaa" stroke-width="0.4"/>
<text x="48" y="85.4" font-size="5.8" fill="#fff" textLength="21" lengthAdjust="spacingAndGlyphs">(未保存)</text>
<circle cx="81.5" cy="83" r="3" fill="#fff" stroke="#555" stroke-width="0.8"/><circle cx="81.5" cy="83" r="1.2" fill="#333"/>
<!-- rows -->
<g font-size="6" fill="#2e2e2e">
<rect x="29.5" y="90.3" width="69" height="10" fill="#f0f0f0"/>
<rect x="29.5" y="102.6" width="71" height="10" fill="#f0f0f0"/>
<rect x="29.5" y="114.9" width="45.5" height="10" fill="#f0f0f0"/>
<rect x="29.5" y="127.2" width="48.5" height="10" fill="#f0f0f0"/>
<rect x="29.5" y="139.5" width="55.5" height="10" fill="#f0f0f0"/>
<text x="44" y="97.8" textLength="50" lengthAdjust="spacingAndGlyphs">ドキュメントの設定</text>
<text x="46" y="110.1" textLength="50" lengthAdjust="spacingAndGlyphs">名前の付いたビュー</text>
<text x="59" y="122.4" textLength="11.5" lengthAdjust="spacingAndGlyphs">原点</text>
<text x="59" y="134.7" textLength="15" lengthAdjust="spacingAndGlyphs">ボディ</text>
<text x="59" y="147" textLength="21" lengthAdjust="spacingAndGlyphs">スケッチ</text>
</g>
<g fill="#fff" stroke="#444" stroke-width="0.9">
<path d="M19.8,92.5v5.4l3.6,-2.7z"/>
<path d="M19.8,104.8v5.4l3.6,-2.7z"/>
<path d="M19.8,117.1v5.4l3.6,-2.7z"/>
<path d="M19.8,129.4v5.4l3.6,-2.7z"/>
<path d="M19.8,141.7v5.4l3.6,-2.7z"/>
</g>
<!-- gear -->
<circle cx="32.3" cy="95.3" r="2.6" fill="none" stroke="#777" stroke-width="1.4" stroke-dasharray="1,0.6"/>
<!-- folders -->
<g fill="#8f8f8f">
<path d="M30,104h3l1,1h4v5.5h-8z"/>
<path d="M43,116.3h3l1,1h4v5.5h-8z"/>
<path d="M43,128.6h3l1,1h4v5.5h-8z"/>
<path d="M43,140.9h3l1,1h4v5.5h-8z"/>
</g>
<!-- eyes -->
<g fill="none" stroke-width="0.9">
<ellipse cx="34" cy="119.8" rx="3.5" ry="2" stroke="#c0c0c0"/>
<ellipse cx="34" cy="132.1" rx="3.5" ry="2" stroke="#888"/>
<ellipse cx="34" cy="144.4" rx="3.5" ry="2" stroke="#888"/>
</g>
<circle cx="34" cy="119.8" r="1" fill="#c0c0c0"/><circle cx="34" cy="132.1" r="1" fill="#888"/><circle cx="34" cy="144.4" r="1" fill="#888"/>

<!-- nav bar -->
<rect x="471" y="597.6" width="119.5" height="11.8" fill="#f0f0f0" fill-opacity="0.9"/>
<g stroke="#333" stroke-width="0.8" fill="none">
<path d="M476,599.5v8M472.5,604h7M473.5,601.5l4.5,4.5"/>
<rect x="489.5" y="601" width="7.5" height="6" fill="#f4f4f4"/><path d="M489.5,602.8h7.5M491.5,599.8h4"/>
<path d="M503.5,605v-3.5a1,1 0 0 1 2,0v-1a1,1 0 0 1 2,0v1a1,1 0 0 1 2,0v4c0,2 -1,3 -3,3s-3,-1 -3,-3.5z"/>
<circle cx="519" cy="603" r="2.8"/><path d="M521,605l2.2,2.2M522.5,599.5v2M521.5,600.5h2"/>
<circle cx="533" cy="603" r="3.3" stroke="#444"/><path d="M535.5,605.5l2,2"/>
<path d="M529.5,608h7" stroke-dasharray="1,1"/>
</g>
<rect x="546" y="599" width="9" height="7" fill="#6fa8e6" stroke="#333" stroke-width="0.8"/>
<path d="M548.5,606.5v2h4" stroke="#333" stroke-width="0.8" fill="none"/>
<rect x="562" y="598.8" width="8.5" height="9" fill="#888"/>
<path d="M562,601.8h8.5M562,604.8h8.5M564.8,598.8v9M567.7,598.8v9" stroke="#f0f0f0" stroke-width="0.6"/>
<rect x="578" y="599.5" width="8.5" height="7.5" fill="#3a5ea8"/>
<path d="M578,603.2h8.5M582.2,599.5v7.5" stroke="#cfe0f5" stroke-width="0.7"/>
<g fill="#333">
<path d="M483,602.8h2.4l-1.2,1.4z"/><path d="M540,602.8h2.4l-1.2,1.4z"/><path d="M556.3,602.8h2.4l-1.2,1.4z"/>
<path d="M572,602.8h2.4l-1.2,1.4z"/><path d="M587.8,602.8h2.4l-1.2,1.4z"/>
</g>

<!-- comment panel -->
<rect x="1.5" y="598.4" width="153" height="12" fill="#f0f0f0" stroke="#d0d0d0" stroke-width="0.8"/>
<text x="14" y="606.4" font-size="5.6" fill="#666" textLength="21" lengthAdjust="spacingAndGlyphs">コメント</text>
<circle cx="146.2" cy="604.4" r="2.5" fill="#333"/><path d="M144.8,604.4h2.8M146.2,603v2.8" stroke="#f0f0f0" stroke-width="0.7"/>

<!-- bottom timeline -->
<rect x="0" y="613" width="1046" height="25" fill="#f0f0f0"/>
<rect x="0" y="612.6" width="1046" height="1" fill="#c8c8c8"/>
<g fill="#555">
<rect x="5" y="623.5" width="1" height="6"/><path d="M6,626.5l4,-3v6z"/>
<path d="M17,626.5l3.5,-2.5v5z"/><rect x="20.5" y="625.8" width="3" height="1.4"/>
<path d="M29,623l5.5,3.5l-5.5,3.5z"/>
<rect x="42" y="625.8" width="3" height="1.4"/><path d="M45,624l3.5,2.5l-3.5,2.5z"/>
<path d="M56,623.5l4,3l-4,3z"/><rect x="60" y="623.5" width="1" height="6"/>
</g>
<!-- feature icons -->
<g>
<rect x="74.5" y="622.5" width="6" height="6.5" fill="none" stroke="#3a8fd6" stroke-width="0.7" stroke-dasharray="1,1"/>
<path d="M78,628.5l3,-2.5" stroke="#f09020" stroke-width="1.2"/>
<rect x="86" y="622.8" width="5" height="6.5" fill="#4aa3e6"/><path d="M92,622.5v6.5" stroke="#444" stroke-width="0.8"/>
<path d="M98,629.5v-4c0,-2 1.5,-3 3.5,-3c2.5,0 4.5,2 4.5,4v3z" fill="#dcdcdc" stroke="#666" stroke-width="0.6"/>
<path d="M101.5,622.5c2.5,0 4.5,2 4.5,4l-1.5,0.5c0,-2 -1.5,-3 -3,-3.2z" fill="#4aa3e6"/>
<rect x="111.5" y="622.5" width="6" height="6.5" fill="none" stroke="#3a8fd6" stroke-width="0.7" stroke-dasharray="1,1"/>
<path d="M115,628.5l3,-2.5" stroke="#f09020" stroke-width="1.2"/>
<rect x="123" y="622.8" width="5" height="6.5" fill="#4aa3e6"/><path d="M129,622.5v6.5" stroke="#444" stroke-width="0.8"/>
<path d="M135,629.5v-4c0,-2 1.5,-3 3.5,-3c2.5,0 4.5,2 4.5,4v3z" fill="#dcdcdc" stroke="#666" stroke-width="0.6"/>
<path d="M138.5,622.5c2.5,0 4.5,2 4.5,4l-1.5,0.5c0,-2 -1.5,-3 -3,-3.2z" fill="#4aa3e6"/>
</g>
<path d="M78.5,633.5h61.5" stroke="#bbb" stroke-width="0.8"/>
<path d="M78.5,632v1.5M90.5,632v1.5M102.5,632v1.5M114.5,632v1.5M126.5,632v1.5M140,632v1.5" stroke="#bbb" stroke-width="0.6"/>
<path d="M142.3,618.8h6l-3,4z" fill="#444"/><rect x="144.9" y="621" width="0.9" height="14.5" fill="#444"/>
</svg>

</body></html>
